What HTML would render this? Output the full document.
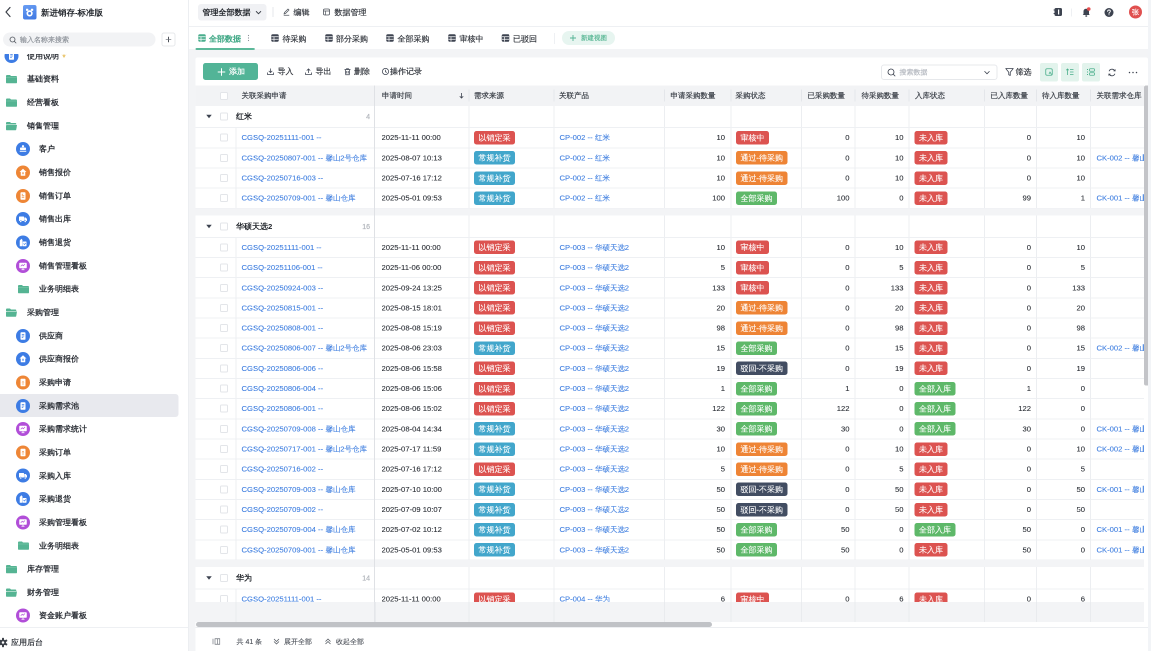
<!DOCTYPE html><html><head><meta charset="utf-8"><style>
html,body{margin:0;padding:0;width:1151px;height:651px;overflow:hidden;background:#fff}
#root{position:absolute;left:0;top:0;width:2302px;height:1302px;transform:scale(0.5);transform-origin:0 0;will-change:transform;-webkit-text-stroke-width:0.4px;font-family:"Liberation Sans",sans-serif;color:#2b2f36;overflow:hidden;background:#fff}
.a{position:absolute}
.b{font-weight:bold;-webkit-text-stroke-width:0}
.t{position:absolute;white-space:nowrap}
svg{position:absolute;overflow:visible}
.sb-item{position:absolute;left:0;height:46px;line-height:46px;font-size:16px;color:#33373e;white-space:nowrap}
.ic{position:absolute;border-radius:50%}
.cb{position:absolute;width:16px;height:16px;border:2px solid #e3e5e9;border-radius:3px;background:#fff;box-sizing:border-box}
.vl{position:absolute;width:2px;background:#eceef1}
.hl{position:absolute;height:2px;background:#eef0f3}
.badge{position:absolute;height:27px;line-height:27px;border-radius:5px;color:#fff;font-size:16px;padding:0 9px;white-space:nowrap;-webkit-text-stroke-width:0.2px}
.lnk{color:#4280e0;-webkit-text-stroke-width:0.2px}
.num{position:absolute;text-align:right;font-size:15.3px;white-space:nowrap;-webkit-text-stroke-width:0.2px}
</style></head><body><div id="root">
<div class="a" style="left:0;top:0;width:376px;height:1302px;background:#fff;border-right:2px solid #eceef1;box-sizing:content-box"></div>
<svg style="left:8px;top:13px" width="16" height="22" viewBox="0 0 16 22"><path d="M12 2 L4 11 L12 20" fill="none" stroke="#3a3f47" stroke-width="2.4" stroke-linecap="round" stroke-linejoin="round"/></svg>
<div class="a" style="left:46px;top:10px;width:27px;height:29px;border-radius:4px;background:linear-gradient(160deg,#6a9ef3,#3d76e2)"></div>
<svg style="left:46px;top:10px" width="27" height="29" viewBox="0 0 27 29"><circle cx="13.2" cy="16.8" r="4.6" fill="none" stroke="#fff" stroke-width="3.2"/><rect x="6" y="7.5" width="4.6" height="4.2" rx="1" fill="#fff"/><rect x="15.8" y="7.5" width="4.6" height="4.2" rx="1" fill="#fff"/><circle cx="13.2" cy="16.5" r="1.6" fill="#3f78e3"/></svg>
<div class="t b" style="left:82px;top:10px;height:30px;line-height:30px;font-size:16.5px;color:#1f2329">新进销存-标准版</div>
<div class="a" style="left:6px;top:65px;width:305px;height:28px;border-radius:14px;background:#f2f3f5"></div>
<svg style="left:18px;top:72px" width="16" height="16" viewBox="0 0 16 16"><circle cx="7" cy="7" r="5" fill="none" stroke="#50555d" stroke-width="1.6"/><path d="M10.8 10.8 L14 14" stroke="#50555d" stroke-width="1.6" stroke-linecap="round"/></svg>
<div class="t" style="left:40px;top:65px;height:28px;line-height:28px;font-size:14px;color:#90959c">输入名称来搜索</div>
<div class="a" style="left:323px;top:65px;width:28px;height:28px;border:2px solid #e6e8eb;border-radius:5px;box-sizing:border-box;background:#fff"></div>
<svg style="left:329px;top:71px" width="16" height="16" viewBox="0 0 16 16"><path d="M8 2.5 V13.5" stroke="#3a3f47" stroke-width="1.8"/><path d="M2.5 8 H13.5" stroke="#6a6f77" stroke-width="1.3"/></svg>
<div class="a" style="left:0;top:108px;width:376px;height:1146px;overflow:hidden">
<svg style="left:9px;top:-10.400000000000006px" width="28" height="28" viewBox="0 0 28 28"><circle cx="14" cy="14" r="14" fill="#3d7ce4"/><rect x="9" y="6.5" width="10" height="15" rx="1.5" fill="#fff"/><path d="M11.5 11 H16.5 M11.5 14 H16.5 M11.5 17 H14.5" stroke="#3d7ce4" stroke-width="1.3"/></svg>
<div class="t" style="left:54px;top:-11.4px;height:30px;line-height:30px;font-size:16px;color:#2a2e35;-webkit-text-stroke-width:0.6px">使用说明</div>
<svg style="left:122px;top:-2.4px" width="12" height="12" viewBox="0 0 12 12"><path d="M1 2 L6 10 L11 2 L8 5 L6 2 L4 5 Z" fill="#e9c46a"/></svg>
<svg style="left:11px;top:41.25999999999999px" width="24" height="18" viewBox="0 0 24 18"><path d="M1 3 Q1 1 3 1 H9 L11 3 H21 Q23 3 23 5 V16 Q23 17.5 21.5 17.5 H2.5 Q1 17.5 1 16 Z" fill="#55b493"/><path d="M1 6 H23" stroke="#7cc8ac" stroke-width="1.2"/></svg>
<div class="t" style="left:54px;top:35.3px;height:30px;line-height:30px;font-size:16px;color:#2a2e35;-webkit-text-stroke-width:0.6px">基础资料</div>
<svg style="left:11px;top:87.91999999999999px" width="24" height="18" viewBox="0 0 24 18"><path d="M1 3 Q1 1 3 1 H9 L11 3 H21 Q23 3 23 5 V16 Q23 17.5 21.5 17.5 H2.5 Q1 17.5 1 16 Z" fill="#55b493"/><path d="M1 6 H23" stroke="#7cc8ac" stroke-width="1.2"/></svg>
<div class="t" style="left:54px;top:81.9px;height:30px;line-height:30px;font-size:16px;color:#2a2e35;-webkit-text-stroke-width:0.6px">经营看板</div>
<svg style="left:11px;top:134.57999999999998px" width="24" height="18" viewBox="0 0 24 18"><path d="M1 3 Q1 1 3 1 H9 L11 3 H20 Q21.5 3 21.5 4.5 V6 H1 Z" fill="#55b493"/><path d="M2.5 7 H23 L21.5 16 Q21.2 17.5 19.8 17.5 H2.5 Q1 17.5 1 16 V8.5 Q1 7 2.5 7 Z" fill="#55b493"/></svg>
<div class="t" style="left:54px;top:128.6px;height:30px;line-height:30px;font-size:16px;color:#2a2e35;-webkit-text-stroke-width:0.6px">销售管理</div>
<svg style="left:32px;top:176.24px" width="28" height="28" viewBox="0 0 28 28"><circle cx="14" cy="14" r="14" fill="#3d7ce4"/><circle cx="14" cy="8.5" r="2.3" fill="#fff"/><rect x="8" y="11" width="12" height="5" rx="1.5" fill="#fff"/><rect x="7.5" y="17.5" width="13" height="2" fill="#fff"/></svg>
<div class="t" style="left:78px;top:175.2px;height:30px;line-height:30px;font-size:16px;color:#2a2e35;-webkit-text-stroke-width:0.6px">客户</div>
<svg style="left:32px;top:222.89999999999998px" width="28" height="28" viewBox="0 0 28 28"><circle cx="14" cy="14" r="14" fill="#ee8636"/><path d="M14 6.5 L21 13 H18.5 V20.5 H9.5 V13 H7 Z" fill="#fff"/><rect x="12.8" y="13.5" width="2.4" height="4" fill="#ee8636"/></svg>
<div class="t" style="left:78px;top:221.9px;height:30px;line-height:30px;font-size:16px;color:#2a2e35;-webkit-text-stroke-width:0.6px">销售报价</div>
<svg style="left:32px;top:269.55999999999995px" width="28" height="28" viewBox="0 0 28 28"><circle cx="14" cy="14" r="14" fill="#ee8636"/><rect x="9" y="6.5" width="10" height="15" rx="1.5" fill="#fff"/><path d="M11.5 10.5 H14 M11.5 13.5 H16.5 M11.5 16.5 H16.5" stroke="#ee8636" stroke-width="1.3"/></svg>
<div class="t" style="left:78px;top:268.6px;height:30px;line-height:30px;font-size:16px;color:#2a2e35;-webkit-text-stroke-width:0.6px">销售订单</div>
<svg style="left:32px;top:316.22px" width="28" height="28" viewBox="0 0 28 28"><circle cx="14" cy="14" r="14" fill="#3d7ce4"/><rect x="6" y="9" width="10" height="9" rx="1" fill="#fff"/><path d="M16.5 11 H19.5 L22 14 V18 H16.5 Z" fill="#fff"/><circle cx="9.5" cy="19" r="2" fill="#fff" stroke="#3d7ce4" stroke-width="1"/><circle cx="18.5" cy="19" r="2" fill="#fff" stroke="#3d7ce4" stroke-width="1"/></svg>
<div class="t" style="left:78px;top:315.2px;height:30px;line-height:30px;font-size:16px;color:#2a2e35;-webkit-text-stroke-width:0.6px">销售出库</div>
<svg style="left:32px;top:362.88px" width="28" height="28" viewBox="0 0 28 28"><circle cx="14" cy="14" r="14" fill="#3d7ce4"/><path d="M7.5 10 L11 6.5 L13 9 V21.5 H7.5 Z" fill="#fff"/><rect x="13.5" y="12" width="7.5" height="9.5" rx="1" fill="#fff"/><path d="M15 16 L17 18 L19.5 15" stroke="#3d7ce4" stroke-width="1.2" fill="none"/></svg>
<div class="t" style="left:78px;top:361.9px;height:30px;line-height:30px;font-size:16px;color:#2a2e35;-webkit-text-stroke-width:0.6px">销售退货</div>
<svg style="left:32px;top:409.53999999999996px" width="28" height="28" viewBox="0 0 28 28"><circle cx="14" cy="14" r="14" fill="#b14ed8"/><rect x="6.5" y="7.5" width="15" height="11" rx="1.5" fill="#fff"/><path d="M14 18.5 V21.5 M11 21.5 H17" stroke="#fff" stroke-width="1.6"/><path d="M9.5 14.5 L12.5 11.5 L14.5 13.5 L18 10" stroke="#b14ed8" stroke-width="1.3" fill="none"/></svg>
<div class="t" style="left:78px;top:408.5px;height:30px;line-height:30px;font-size:16px;color:#2a2e35;-webkit-text-stroke-width:0.6px">销售管理看板</div>
<svg style="left:35px;top:461.19999999999993px" width="24" height="18" viewBox="0 0 24 18"><path d="M1 3 Q1 1 3 1 H9 L11 3 H21 Q23 3 23 5 V16 Q23 17.5 21.5 17.5 H2.5 Q1 17.5 1 16 Z" fill="#55b493"/><path d="M1 6 H23" stroke="#7cc8ac" stroke-width="1.2"/></svg>
<div class="t" style="left:78px;top:455.2px;height:30px;line-height:30px;font-size:16px;color:#2a2e35;-webkit-text-stroke-width:0.6px">业务明细表</div>
<svg style="left:11px;top:507.86px" width="24" height="18" viewBox="0 0 24 18"><path d="M1 3 Q1 1 3 1 H9 L11 3 H20 Q21.5 3 21.5 4.5 V6 H1 Z" fill="#55b493"/><path d="M2.5 7 H23 L21.5 16 Q21.2 17.5 19.8 17.5 H2.5 Q1 17.5 1 16 V8.5 Q1 7 2.5 7 Z" fill="#55b493"/></svg>
<div class="t" style="left:54px;top:501.9px;height:30px;line-height:30px;font-size:16px;color:#2a2e35;-webkit-text-stroke-width:0.6px">采购管理</div>
<svg style="left:32px;top:549.52px" width="28" height="28" viewBox="0 0 28 28"><circle cx="14" cy="14" r="14" fill="#3d7ce4"/><rect x="9" y="6.5" width="10" height="15" rx="1.5" fill="#fff"/><path d="M11.5 11 H16.5 M11.5 14 H16.5 M11.5 17 H14.5" stroke="#3d7ce4" stroke-width="1.3"/></svg>
<div class="t" style="left:78px;top:548.5px;height:30px;line-height:30px;font-size:16px;color:#2a2e35;-webkit-text-stroke-width:0.6px">供应商</div>
<svg style="left:32px;top:596.18px" width="28" height="28" viewBox="0 0 28 28"><circle cx="14" cy="14" r="14" fill="#3d7ce4"/><path d="M14 6.5 L21 13 H18.5 V20.5 H9.5 V13 H7 Z" fill="#fff"/><rect x="12.8" y="13.5" width="2.4" height="4" fill="#3d7ce4"/></svg>
<div class="t" style="left:78px;top:595.2px;height:30px;line-height:30px;font-size:16px;color:#2a2e35;-webkit-text-stroke-width:0.6px">供应商报价</div>
<svg style="left:32px;top:642.84px" width="28" height="28" viewBox="0 0 28 28"><circle cx="14" cy="14" r="14" fill="#ee8636"/><rect x="9" y="6.5" width="10" height="15" rx="1.5" fill="#fff"/><path d="M12 14 L14 11.5 L16 14 M12.5 17 H15.5" stroke="#ee8636" stroke-width="1.3" fill="none"/></svg>
<div class="t" style="left:78px;top:641.8px;height:30px;line-height:30px;font-size:16px;color:#2a2e35;-webkit-text-stroke-width:0.6px">采购申请</div>
<div class="a" style="left:0;top:680px;width:357px;height:46px;background:#e8e9ee;border-radius:0 6px 6px 0"></div>
<svg style="left:32px;top:689.5px" width="28" height="28" viewBox="0 0 28 28"><circle cx="14" cy="14" r="14" fill="#3d7ce4"/><rect x="9" y="6.5" width="10" height="15" rx="1.5" fill="#fff"/><path d="M11.5 11 H16.5 M11.5 14 H16.5 M11.5 17 H14.5" stroke="#3d7ce4" stroke-width="1.3"/></svg>
<div class="t" style="left:78px;top:688.5px;height:30px;line-height:30px;font-size:16px;color:#2a2e35;-webkit-text-stroke-width:0.6px">采购需求池</div>
<svg style="left:32px;top:736.16px" width="28" height="28" viewBox="0 0 28 28"><circle cx="14" cy="14" r="14" fill="#b14ed8"/><rect x="6.5" y="7.5" width="15" height="11" rx="1.5" fill="#fff"/><path d="M14 18.5 V21.5 M11 21.5 H17" stroke="#fff" stroke-width="1.6"/><path d="M9.5 14.5 L12.5 11.5 L14.5 13.5 L18 10" stroke="#b14ed8" stroke-width="1.3" fill="none"/></svg>
<div class="t" style="left:78px;top:735.2px;height:30px;line-height:30px;font-size:16px;color:#2a2e35;-webkit-text-stroke-width:0.6px">采购需求统计</div>
<svg style="left:32px;top:782.8199999999999px" width="28" height="28" viewBox="0 0 28 28"><circle cx="14" cy="14" r="14" fill="#ee8636"/><rect x="9" y="6.5" width="10" height="15" rx="1.5" fill="#fff"/><path d="M12 14 L14 11.5 L16 14 M12.5 17 H15.5" stroke="#ee8636" stroke-width="1.3" fill="none"/></svg>
<div class="t" style="left:78px;top:781.8px;height:30px;line-height:30px;font-size:16px;color:#2a2e35;-webkit-text-stroke-width:0.6px">采购订单</div>
<svg style="left:32px;top:829.4799999999999px" width="28" height="28" viewBox="0 0 28 28"><circle cx="14" cy="14" r="14" fill="#3d7ce4"/><rect x="6" y="9" width="10" height="9" rx="1" fill="#fff"/><path d="M16.5 11 H19.5 L22 14 V18 H16.5 Z" fill="#fff"/><circle cx="9.5" cy="19" r="2" fill="#fff" stroke="#3d7ce4" stroke-width="1"/><circle cx="18.5" cy="19" r="2" fill="#fff" stroke="#3d7ce4" stroke-width="1"/></svg>
<div class="t" style="left:78px;top:828.5px;height:30px;line-height:30px;font-size:16px;color:#2a2e35;-webkit-text-stroke-width:0.6px">采购入库</div>
<svg style="left:32px;top:876.14px" width="28" height="28" viewBox="0 0 28 28"><circle cx="14" cy="14" r="14" fill="#3d7ce4"/><path d="M7.5 10 L11 6.5 L13 9 V21.5 H7.5 Z" fill="#fff"/><rect x="13.5" y="12" width="7.5" height="9.5" rx="1" fill="#fff"/><path d="M15 16 L17 18 L19.5 15" stroke="#3d7ce4" stroke-width="1.2" fill="none"/></svg>
<div class="t" style="left:78px;top:875.1px;height:30px;line-height:30px;font-size:16px;color:#2a2e35;-webkit-text-stroke-width:0.6px">采购退货</div>
<svg style="left:32px;top:922.8px" width="28" height="28" viewBox="0 0 28 28"><circle cx="14" cy="14" r="14" fill="#b14ed8"/><rect x="6.5" y="7.5" width="15" height="11" rx="1.5" fill="#fff"/><path d="M14 18.5 V21.5 M11 21.5 H17" stroke="#fff" stroke-width="1.6"/><path d="M9.5 14.5 L12.5 11.5 L14.5 13.5 L18 10" stroke="#b14ed8" stroke-width="1.3" fill="none"/></svg>
<div class="t" style="left:78px;top:921.8px;height:30px;line-height:30px;font-size:16px;color:#2a2e35;-webkit-text-stroke-width:0.6px">采购管理看板</div>
<svg style="left:35px;top:974.4599999999998px" width="24" height="18" viewBox="0 0 24 18"><path d="M1 3 Q1 1 3 1 H9 L11 3 H21 Q23 3 23 5 V16 Q23 17.5 21.5 17.5 H2.5 Q1 17.5 1 16 Z" fill="#55b493"/><path d="M1 6 H23" stroke="#7cc8ac" stroke-width="1.2"/></svg>
<div class="t" style="left:78px;top:968.5px;height:30px;line-height:30px;font-size:16px;color:#2a2e35;-webkit-text-stroke-width:0.6px">业务明细表</div>
<svg style="left:11px;top:1021.1199999999999px" width="24" height="18" viewBox="0 0 24 18"><path d="M1 3 Q1 1 3 1 H9 L11 3 H21 Q23 3 23 5 V16 Q23 17.5 21.5 17.5 H2.5 Q1 17.5 1 16 Z" fill="#55b493"/><path d="M1 6 H23" stroke="#7cc8ac" stroke-width="1.2"/></svg>
<div class="t" style="left:54px;top:1015.1px;height:30px;line-height:30px;font-size:16px;color:#2a2e35;-webkit-text-stroke-width:0.6px">库存管理</div>
<svg style="left:11px;top:1067.7799999999997px" width="24" height="18" viewBox="0 0 24 18"><path d="M1 3 Q1 1 3 1 H9 L11 3 H20 Q21.5 3 21.5 4.5 V6 H1 Z" fill="#55b493"/><path d="M2.5 7 H23 L21.5 16 Q21.2 17.5 19.8 17.5 H2.5 Q1 17.5 1 16 V8.5 Q1 7 2.5 7 Z" fill="#55b493"/></svg>
<div class="t" style="left:54px;top:1061.8px;height:30px;line-height:30px;font-size:16px;color:#2a2e35;-webkit-text-stroke-width:0.6px">财务管理</div>
<svg style="left:32px;top:1109.4399999999998px" width="28" height="28" viewBox="0 0 28 28"><circle cx="14" cy="14" r="14" fill="#b14ed8"/><rect x="6.5" y="7.5" width="15" height="11" rx="1.5" fill="#fff"/><path d="M14 18.5 V21.5 M11 21.5 H17" stroke="#fff" stroke-width="1.6"/><path d="M9.5 14.5 L12.5 11.5 L14.5 13.5 L18 10" stroke="#b14ed8" stroke-width="1.3" fill="none"/></svg>
<div class="t" style="left:78px;top:1108.4px;height:30px;line-height:30px;font-size:16px;color:#2a2e35;-webkit-text-stroke-width:0.6px">资金账户看板</div>
</div>
<div class="a" style="left:0;top:1254px;width:376px;height:2px;background:#eef0f3"></div>
<svg style="left:-5px;top:1274px" width="22" height="22" viewBox="0 0 22 22"><g fill="#3a3f47"><rect x="9" y="1.5" width="4" height="19" rx="1.5"/><rect x="9" y="1.5" width="4" height="19" rx="1.5" transform="rotate(60 11 11)"/><rect x="9" y="1.5" width="4" height="19" rx="1.5" transform="rotate(120 11 11)"/><circle cx="11" cy="11" r="6"/></g><circle cx="11" cy="11" r="2.5" fill="#fff"/></svg>
<div class="t" style="left:22px;top:1270px;height:30px;line-height:30px;font-size:16px;color:#2b2f36">应用后台</div>
<div class="a" style="left:378px;top:98px;width:1918px;height:1204px;background:#f3f4f6"></div>
<div class="a" style="left:2296px;top:0;width:6px;height:1302px;background:#f2f4f7"></div>
<div class="a" style="left:378px;top:52px;width:1918px;height:2px;background:#eef0f3"></div>
<div class="a" style="left:396px;top:8px;width:137px;height:33px;border-radius:6px;background:#f0f1f4"></div>
<div class="t b" style="left:405px;top:9px;height:31px;line-height:31px;font-size:16px;color:#1f2329">管理全部数据</div>
<svg style="left:510px;top:20px" width="14" height="10" viewBox="0 0 14 10"><path d="M2 2.5 L7 7.5 L12 2.5" fill="none" stroke="#3a3f47" stroke-width="1.8"/></svg>
<div class="a" style="left:545px;top:14px;width:2px;height:20px;background:#e5e6eb"></div>
<svg style="left:565px;top:16px" width="16" height="16" viewBox="0 0 16 16"><path d="M3 12 L4 9 L11 2 L13 4 L6 11 Z M2.5 14.5 H13.5" fill="none" stroke="#50555d" stroke-width="1.5" stroke-linejoin="round"/></svg>
<div class="t" style="left:587px;top:9px;height:31px;line-height:31px;font-size:16px;color:#33373e">编辑</div>
<svg style="left:645px;top:16px" width="16" height="16" viewBox="0 0 16 16"><rect x="2" y="2" width="12" height="12" rx="2.5" fill="none" stroke="#50555d" stroke-width="1.6"/><path d="M2 6 H14 M6 6 V14" stroke="#50555d" stroke-width="1.4"/></svg>
<div class="t" style="left:669px;top:9px;height:31px;line-height:31px;font-size:16px;color:#33373e">数据管理</div>
<svg style="left:2106px;top:15px" width="20" height="18" viewBox="0 0 20 18"><rect x="3" y="1" width="15" height="16" rx="3" fill="#3d4350"/><rect x="1" y="4" width="4" height="2" rx="1" fill="#3d4350"/><rect x="1" y="11" width="4" height="2" rx="1" fill="#3d4350"/><rect x="10" y="4" width="2.4" height="10" fill="#fff"/></svg>
<div class="a" style="left:2142px;top:17px;width:2px;height:16px;background:#eef0f3"></div>
<svg style="left:2162px;top:13px" width="22" height="22" viewBox="0 0 22 22"><path d="M5 15 V10 Q5 4.5 10.5 4.5 Q16 4.5 16 10 V15 L17.5 17 H3.5 Z" fill="#3d4350"/><rect x="8.5" y="17.5" width="4" height="3" rx="1.5" fill="#3d4350"/><circle cx="15.5" cy="5" r="3.6" fill="#e54d4d"/></svg>
<svg style="left:2208px;top:15px" width="20" height="20" viewBox="0 0 20 20"><circle cx="10" cy="10" r="9" fill="#3d4350"/><path d="M7.3 7.8 Q7.3 5 10 5 Q12.7 5 12.7 7.5 Q12.7 9 10.8 10 Q10 10.5 10 12" fill="none" stroke="#fff" stroke-width="1.8" stroke-linecap="round"/><circle cx="10" cy="14.6" r="1.1" fill="#fff"/></svg>
<div class="a" style="left:2258px;top:11px;width:26px;height:26px;border-radius:50%;background:#e0504f;color:#fff;font-size:14px;line-height:26px;text-align:center">张</div>
<svg style="left:396px;top:68px" width="16" height="16" viewBox="0 0 16 16"><rect x="0.5" y="0.5" width="15" height="15" rx="3" fill="#49ad8c"/><path d="M1 5.5 H15 M1 10.5 H15 M6 5.5 V15" stroke="#fff" stroke-width="1.4"/></svg>
<div class="t" style="left:418px;top:62px;height:31px;line-height:31px;font-size:16px;-webkit-text-stroke-width:0.8px;color:#41a886">全部数据</div>
<svg style="left:542px;top:68px" width="16" height="16" viewBox="0 0 16 16"><rect x="0.5" y="0.5" width="15" height="15" rx="3" fill="#3d4350"/><path d="M1 5.5 H15 M1 10.5 H15 M6 5.5 V15" stroke="#fff" stroke-width="1.4"/></svg>
<div class="t" style="left:565px;top:62px;height:31px;line-height:31px;font-size:16px;color:#33373e">待采购</div>
<svg style="left:650px;top:68px" width="16" height="16" viewBox="0 0 16 16"><rect x="0.5" y="0.5" width="15" height="15" rx="3" fill="#3d4350"/><path d="M1 5.5 H15 M1 10.5 H15 M6 5.5 V15" stroke="#fff" stroke-width="1.4"/></svg>
<div class="t" style="left:672px;top:62px;height:31px;line-height:31px;font-size:16px;color:#33373e">部分采购</div>
<svg style="left:772px;top:68px" width="16" height="16" viewBox="0 0 16 16"><rect x="0.5" y="0.5" width="15" height="15" rx="3" fill="#3d4350"/><path d="M1 5.5 H15 M1 10.5 H15 M6 5.5 V15" stroke="#fff" stroke-width="1.4"/></svg>
<div class="t" style="left:795px;top:62px;height:31px;line-height:31px;font-size:16px;color:#33373e">全部采购</div>
<svg style="left:896px;top:68px" width="16" height="16" viewBox="0 0 16 16"><rect x="0.5" y="0.5" width="15" height="15" rx="3" fill="#3d4350"/><path d="M1 5.5 H15 M1 10.5 H15 M6 5.5 V15" stroke="#fff" stroke-width="1.4"/></svg>
<div class="t" style="left:919px;top:62px;height:31px;line-height:31px;font-size:16px;color:#33373e">审核中</div>
<svg style="left:1003px;top:68px" width="16" height="16" viewBox="0 0 16 16"><rect x="0.5" y="0.5" width="15" height="15" rx="3" fill="#3d4350"/><path d="M1 5.5 H15 M1 10.5 H15 M6 5.5 V15" stroke="#fff" stroke-width="1.4"/></svg>
<div class="t" style="left:1026px;top:62px;height:31px;line-height:31px;font-size:16px;color:#33373e">已驳回</div>
<svg style="left:494px;top:68px" width="6" height="16" viewBox="0 0 6 16"><circle cx="3" cy="3" r="1.2" fill="#8a8f97"/><circle cx="3" cy="8" r="1.2" fill="#8a8f97"/><circle cx="3" cy="13" r="1.2" fill="#8a8f97"/></svg>
<div class="a" style="left:391px;top:96px;width:118px;height:4px;border-radius:2px;background:#5cb899"></div>
<div class="a" style="left:1108px;top:66px;width:2px;height:22px;background:#eef0f3"></div>
<div class="a" style="left:1124px;top:62px;width:106px;height:28px;border-radius:14px;background:#e7f5f0"></div>
<svg style="left:1139px;top:69px" width="14" height="14" viewBox="0 0 14 14"><path d="M7 1 V13 M1 7 H13" stroke="#52b393" stroke-width="1.8"/></svg>
<div class="t" style="left:1162px;top:61px;height:30px;line-height:30px;font-size:13px;color:#5cb896">新建视图</div>
<div class="a" style="left:391px;top:115px;width:1905px;height:1187px;background:#fff;border-radius:4px 4px 0 0"></div>
<div class="a" style="left:406px;top:126px;width:110px;height:34px;border-radius:5px;background:#52b497"></div>
<svg style="left:434px;top:135px" width="18" height="18" viewBox="0 0 18 18"><path d="M9 1.5 V16.5 M1.5 9 H16.5" stroke="#fff" stroke-width="2"/></svg>
<div class="t" style="left:458px;top:127px;height:32px;line-height:32px;font-size:16px;color:#fff">添加</div>
<svg style="left:533px;top:135px" width="16" height="16" viewBox="0 0 16 16"><path d="M8 2 V10 M4.5 6.8 L8 10.3 L11.5 6.8 M2 10 V14 H14 V10" fill="none" stroke="#3d4350" stroke-width="1.5"/></svg>
<div class="t" style="left:555px;top:127px;height:32px;line-height:32px;font-size:16px;color:#33373e">导入</div>
<svg style="left:609px;top:135px" width="16" height="16" viewBox="0 0 16 16"><path d="M8 11 V3 M4.5 6.2 L8 2.7 L11.5 6.2 M2 10 V14 H14 V10" fill="none" stroke="#3d4350" stroke-width="1.5"/></svg>
<div class="t" style="left:631px;top:127px;height:32px;line-height:32px;font-size:16px;color:#33373e">导出</div>
<svg style="left:687px;top:135px" width="16" height="16" viewBox="0 0 16 16"><path d="M2 4 H14 M6 4 V2.5 H10 V4 M3.5 4 L4.5 14.5 H11.5 L12.5 4 M6.5 7 V12 M9.5 7 V12" fill="none" stroke="#3d4350" stroke-width="1.5"/></svg>
<div class="t" style="left:708px;top:127px;height:32px;line-height:32px;font-size:16px;color:#33373e">删除</div>
<svg style="left:763px;top:135px" width="16" height="16" viewBox="0 0 16 16"><circle cx="8" cy="8" r="6.2" fill="none" stroke="#3d4350" stroke-width="1.5"/><path d="M8 4.5 V8.5 L10.5 10" fill="none" stroke="#3d4350" stroke-width="1.5"/></svg>
<div class="t" style="left:780px;top:127px;height:32px;line-height:32px;font-size:16px;color:#33373e">操作记录</div>
<div class="a" style="left:1762px;top:129px;width:233px;height:31px;border:2px solid #e6e8eb;border-radius:6px;box-sizing:border-box;background:#fff"></div>
<svg style="left:1774px;top:136px" width="18" height="18" viewBox="0 0 18 18"><circle cx="8" cy="8" r="6" fill="none" stroke="#3d4350" stroke-width="1.7"/><path d="M12.5 12.5 L16 16" stroke="#3d4350" stroke-width="1.7" stroke-linecap="round"/></svg>
<div class="t" style="left:1799px;top:129px;height:31px;line-height:31px;font-size:14px;color:#b6bac1">搜索数据</div>
<svg style="left:1966px;top:139px" width="16" height="12" viewBox="0 0 16 12"><path d="M3 3.5 L8 8.5 L13 3.5" fill="none" stroke="#3d4350" stroke-width="1.7"/></svg>
<svg style="left:2010px;top:134px" width="18" height="20" viewBox="0 0 18 20"><path d="M1.5 3 H16.5 L10.5 10.5 V17 L7.5 15.5 V10.5 Z" fill="none" stroke="#3d4350" stroke-width="1.6" stroke-linejoin="round"/></svg>
<div class="t" style="left:2031px;top:128px;height:32px;line-height:32px;font-size:16px;color:#33373e">筛选</div>
<div class="a" style="left:2080px;top:126px;width:36px;height:37px;border-radius:4px;background:#e2f3ec"></div>
<svg style="left:2089px;top:135px" width="18" height="18" viewBox="0 0 18 18"><rect x="2.5" y="2.5" width="13" height="13" rx="2.5" fill="none" stroke="#4aae8b" stroke-width="1.6"/><path d="M9 13 L11 9 L14 14" fill="none" stroke="#4aae8b" stroke-width="1.5"/></svg>
<div class="a" style="left:2122px;top:126px;width:36px;height:37px;border-radius:4px;background:#e2f3ec"></div>
<svg style="left:2131px;top:135px" width="18" height="18" viewBox="0 0 18 18"><path d="M4 15 V3 M1.5 5.5 L4 3 L6.5 5.5 M9 4 H16 M9 9 H16 M9 14 H16" fill="none" stroke="#4aae8b" stroke-width="1.6"/></svg>
<div class="a" style="left:2164px;top:126px;width:36px;height:37px;border-radius:4px;background:#e2f3ec"></div>
<svg style="left:2173px;top:135px" width="18" height="18" viewBox="0 0 18 18"><path d="M2 3 V5 M2 8 V10 M2 13 V15" stroke="#4aae8b" stroke-width="2"/><rect x="6" y="2.5" width="10" height="5" rx="1.5" fill="none" stroke="#4aae8b" stroke-width="1.6"/><rect x="6" y="10.5" width="10" height="5" rx="1.5" fill="none" stroke="#4aae8b" stroke-width="1.6"/></svg>
<svg style="left:2214px;top:135px" width="20" height="20" viewBox="0 0 20 20"><path d="M4.2 7.5 A6.3 6.3 0 0 1 15.5 6.5 M15.8 12.5 A6.3 6.3 0 0 1 4.5 13.5" fill="none" stroke="#3d4350" stroke-width="1.8"/><path d="M13 6.8 L16.2 7 L16.4 3.8 M7 13.2 L3.8 13 L3.6 16.2" fill="none" stroke="#3d4350" stroke-width="1.6"/></svg>
<svg style="left:2256px;top:142px" width="20" height="6" viewBox="0 0 20 6"><circle cx="3" cy="3" r="1.5" fill="#3d4350"/><circle cx="10" cy="3" r="1.5" fill="#3d4350"/><circle cx="17" cy="3" r="1.5" fill="#3d4350"/></svg>
<div class="a" style="left:391px;top:171px;width:1897px;height:1033px;overflow:hidden">
<div class="a" style="left:0;top:0;width:1897px;height:40.599999999999994px;background:#f2f3f5"></div>
<div class="t" style="left:92px;top:0;height:40px;line-height:40px;font-size:15px;color:#3a3f47">关联采购申请</div>
<div class="t" style="left:373px;top:0;height:40px;line-height:40px;font-size:15px;color:#3a3f47">申请时间</div>
<div class="t" style="left:557px;top:0;height:40px;line-height:40px;font-size:15px;color:#3a3f47">需求来源</div>
<div class="t" style="left:727px;top:0;height:40px;line-height:40px;font-size:15px;color:#3a3f47">关联产品</div>
<div class="t" style="left:950px;top:0;height:40px;line-height:40px;font-size:15px;color:#3a3f47">申请采购数量</div>
<div class="t" style="left:1080px;top:0;height:40px;line-height:40px;font-size:15px;color:#3a3f47">采购状态</div>
<div class="t" style="left:1224px;top:0;height:40px;line-height:40px;font-size:15px;color:#3a3f47">已采购数量</div>
<div class="t" style="left:1332px;top:0;height:40px;line-height:40px;font-size:15px;color:#3a3f47">待采购数量</div>
<div class="t" style="left:1439px;top:0;height:40px;line-height:40px;font-size:15px;color:#3a3f47">入库状态</div>
<div class="t" style="left:1590px;top:0;height:40px;line-height:40px;font-size:15px;color:#3a3f47">已入库数量</div>
<div class="t" style="left:1693px;top:0;height:40px;line-height:40px;font-size:15px;color:#3a3f47">待入库数量</div>
<div class="t" style="left:1802px;top:0;height:40px;line-height:40px;font-size:15px;color:#3a3f47">关联需求仓库</div>
<div class="cb" style="left:49px;top:13px"></div>
<svg style="left:525px;top:13px" width="14" height="14" viewBox="0 0 14 14"><path d="M7 2 V12 M3.5 8.5 L7 12 L10.5 8.5" fill="none" stroke="#3d4350" stroke-width="1.6"/></svg>
<div class="vl" style="left:357px;top:8px;height:24px;background:#e4e6ea"></div>
<div class="vl" style="left:546px;top:8px;height:24px;background:#e4e6ea"></div>
<div class="vl" style="left:716px;top:8px;height:24px;background:#e4e6ea"></div>
<div class="vl" style="left:937px;top:8px;height:24px;background:#e4e6ea"></div>
<div class="vl" style="left:1070px;top:8px;height:24px;background:#e4e6ea"></div>
<div class="vl" style="left:1211px;top:8px;height:24px;background:#e4e6ea"></div>
<div class="vl" style="left:1318px;top:8px;height:24px;background:#e4e6ea"></div>
<div class="vl" style="left:1426px;top:8px;height:24px;background:#e4e6ea"></div>
<div class="vl" style="left:1577px;top:8px;height:24px;background:#e4e6ea"></div>
<div class="vl" style="left:1681px;top:8px;height:24px;background:#e4e6ea"></div>
<div class="vl" style="left:1789px;top:8px;height:24px;background:#e4e6ea"></div>
<svg style="left:19px;top:56.4px" width="16" height="12" viewBox="0 0 16 12"><path d="M2.5 2.5 H13.5 L8 9.5 Z" fill="#3d4350"/></svg>
<div class="cb" style="left:49px;top:54.4px"></div>
<div class="t" style="left:81px;top:47.4px;height:30px;line-height:30px;font-size:15.5px;font-weight:bold;-webkit-text-stroke-width:0;color:#1f2329">红米</div>
<div class="t" style="left:209px;width:140px;text-align:right;top:47.4px;height:30px;line-height:30px;font-size:14px;color:#b3b7bd">4</div>
<div class="vl" style="left:357px;top:40.6px;height:43.6px"></div>
<div class="vl" style="left:546px;top:40.6px;height:43.6px"></div>
<div class="vl" style="left:716px;top:40.6px;height:43.6px"></div>
<div class="vl" style="left:937px;top:40.6px;height:43.6px"></div>
<div class="vl" style="left:1070px;top:40.6px;height:43.6px"></div>
<div class="vl" style="left:1211px;top:40.6px;height:43.6px"></div>
<div class="vl" style="left:1318px;top:40.6px;height:43.6px"></div>
<div class="vl" style="left:1426px;top:40.6px;height:43.6px"></div>
<div class="vl" style="left:1577px;top:40.6px;height:43.6px"></div>
<div class="vl" style="left:1681px;top:40.6px;height:43.6px"></div>
<div class="vl" style="left:1789px;top:40.6px;height:43.6px"></div>
<div class="hl" style="left:0;top:83.2px;width:1897px"></div>
<div class="cb" style="left:49px;top:96.4px"></div>
<div class="t lnk" style="left:92px;top:89.4px;height:30px;line-height:30px;font-size:15.3px">CGSQ-20251111-001 --</div>
<div class="t" style="left:372px;top:89.4px;height:30px;line-height:30px;font-size:15.3px;color:#2b2f36;-webkit-text-stroke-width:0.2px">2025-11-11 00:00</div>
<div class="badge" style="left:556.5px;top:90.9px;background:#dc5350">以销定采</div>
<div class="t lnk" style="left:728px;top:89.4px;height:30px;line-height:30px;font-size:15.3px">CP-002 -- 红米</div>
<div class="num" style="left:938px;width:121px;top:89.4px;height:30px;line-height:30px;color:#2b2f36">10</div>
<div class="badge" style="left:1080.5px;top:90.9px;background:#dc5350">审核中</div>
<div class="num" style="left:1212px;width:96px;top:89.4px;height:30px;line-height:30px;color:#2b2f36">0</div>
<div class="num" style="left:1319px;width:97px;top:89.4px;height:30px;line-height:30px;color:#2b2f36">10</div>
<div class="badge" style="left:1438px;top:90.9px;background:#dc5350">未入库</div>
<div class="num" style="left:1578px;width:93px;top:89.4px;height:30px;line-height:30px;color:#2b2f36">0</div>
<div class="num" style="left:1682px;width:97px;top:89.4px;height:30px;line-height:30px;color:#2b2f36">10</div>
<div class="vl" style="left:80px;top:84.2px;height:40.32px;background:#eceef1"></div>
<div class="vl" style="left:357px;top:84.2px;height:40.32px;background:#eceef1"></div>
<div class="vl" style="left:546px;top:84.2px;height:40.32px;background:#eceef1"></div>
<div class="vl" style="left:716px;top:84.2px;height:40.32px;background:#eceef1"></div>
<div class="vl" style="left:937px;top:84.2px;height:40.32px;background:#eceef1"></div>
<div class="vl" style="left:1070px;top:84.2px;height:40.32px;background:#eceef1"></div>
<div class="vl" style="left:1211px;top:84.2px;height:40.32px;background:#eceef1"></div>
<div class="vl" style="left:1318px;top:84.2px;height:40.32px;background:#eceef1"></div>
<div class="vl" style="left:1426px;top:84.2px;height:40.32px;background:#eceef1"></div>
<div class="vl" style="left:1577px;top:84.2px;height:40.32px;background:#eceef1"></div>
<div class="vl" style="left:1681px;top:84.2px;height:40.32px;background:#eceef1"></div>
<div class="vl" style="left:1789px;top:84.2px;height:40.32px;background:#eceef1"></div>
<div class="hl" style="left:0;top:123.5px;width:1897px"></div>
<div class="cb" style="left:49px;top:136.7px"></div>
<div class="t lnk" style="left:92px;top:129.7px;height:30px;line-height:30px;font-size:15.3px">CGSQ-20250807-001 -- 馨山2号仓库</div>
<div class="t" style="left:372px;top:129.7px;height:30px;line-height:30px;font-size:15.3px;color:#2b2f36;-webkit-text-stroke-width:0.2px">2025-08-07 10:13</div>
<div class="badge" style="left:556.5px;top:131.2px;background:#42a6cb">常规补货</div>
<div class="t lnk" style="left:728px;top:129.7px;height:30px;line-height:30px;font-size:15.3px">CP-002 -- 红米</div>
<div class="num" style="left:938px;width:121px;top:129.7px;height:30px;line-height:30px;color:#2b2f36">10</div>
<div class="badge" style="left:1080.5px;top:131.2px;background:#ee8435">通过-待采购</div>
<div class="num" style="left:1212px;width:96px;top:129.7px;height:30px;line-height:30px;color:#2b2f36">0</div>
<div class="num" style="left:1319px;width:97px;top:129.7px;height:30px;line-height:30px;color:#2b2f36">10</div>
<div class="badge" style="left:1438px;top:131.2px;background:#dc5350">未入库</div>
<div class="num" style="left:1578px;width:93px;top:129.7px;height:30px;line-height:30px;color:#2b2f36">0</div>
<div class="num" style="left:1682px;width:97px;top:129.7px;height:30px;line-height:30px;color:#2b2f36">10</div>
<div class="t lnk" style="left:1802px;top:129.7px;height:30px;line-height:30px;font-size:15.3px">CK-002 -- 馨山2号仓库</div>
<div class="vl" style="left:80px;top:124.5px;height:40.32px;background:#eceef1"></div>
<div class="vl" style="left:357px;top:124.5px;height:40.32px;background:#eceef1"></div>
<div class="vl" style="left:546px;top:124.5px;height:40.32px;background:#eceef1"></div>
<div class="vl" style="left:716px;top:124.5px;height:40.32px;background:#eceef1"></div>
<div class="vl" style="left:937px;top:124.5px;height:40.32px;background:#eceef1"></div>
<div class="vl" style="left:1070px;top:124.5px;height:40.32px;background:#eceef1"></div>
<div class="vl" style="left:1211px;top:124.5px;height:40.32px;background:#eceef1"></div>
<div class="vl" style="left:1318px;top:124.5px;height:40.32px;background:#eceef1"></div>
<div class="vl" style="left:1426px;top:124.5px;height:40.32px;background:#eceef1"></div>
<div class="vl" style="left:1577px;top:124.5px;height:40.32px;background:#eceef1"></div>
<div class="vl" style="left:1681px;top:124.5px;height:40.32px;background:#eceef1"></div>
<div class="vl" style="left:1789px;top:124.5px;height:40.32px;background:#eceef1"></div>
<div class="hl" style="left:0;top:163.8px;width:1897px"></div>
<div class="cb" style="left:49px;top:177.0px"></div>
<div class="t lnk" style="left:92px;top:170.0px;height:30px;line-height:30px;font-size:15.3px">CGSQ-20250716-003 --</div>
<div class="t" style="left:372px;top:170.0px;height:30px;line-height:30px;font-size:15.3px;color:#2b2f36;-webkit-text-stroke-width:0.2px">2025-07-16 17:12</div>
<div class="badge" style="left:556.5px;top:171.5px;background:#42a6cb">常规补货</div>
<div class="t lnk" style="left:728px;top:170.0px;height:30px;line-height:30px;font-size:15.3px">CP-002 -- 红米</div>
<div class="num" style="left:938px;width:121px;top:170.0px;height:30px;line-height:30px;color:#2b2f36">10</div>
<div class="badge" style="left:1080.5px;top:171.5px;background:#ee8435">通过-待采购</div>
<div class="num" style="left:1212px;width:96px;top:170.0px;height:30px;line-height:30px;color:#2b2f36">0</div>
<div class="num" style="left:1319px;width:97px;top:170.0px;height:30px;line-height:30px;color:#2b2f36">10</div>
<div class="badge" style="left:1438px;top:171.5px;background:#dc5350">未入库</div>
<div class="num" style="left:1578px;width:93px;top:170.0px;height:30px;line-height:30px;color:#2b2f36">0</div>
<div class="num" style="left:1682px;width:97px;top:170.0px;height:30px;line-height:30px;color:#2b2f36">10</div>
<div class="vl" style="left:80px;top:164.8px;height:40.32px;background:#eceef1"></div>
<div class="vl" style="left:357px;top:164.8px;height:40.32px;background:#eceef1"></div>
<div class="vl" style="left:546px;top:164.8px;height:40.32px;background:#eceef1"></div>
<div class="vl" style="left:716px;top:164.8px;height:40.32px;background:#eceef1"></div>
<div class="vl" style="left:937px;top:164.8px;height:40.32px;background:#eceef1"></div>
<div class="vl" style="left:1070px;top:164.8px;height:40.32px;background:#eceef1"></div>
<div class="vl" style="left:1211px;top:164.8px;height:40.32px;background:#eceef1"></div>
<div class="vl" style="left:1318px;top:164.8px;height:40.32px;background:#eceef1"></div>
<div class="vl" style="left:1426px;top:164.8px;height:40.32px;background:#eceef1"></div>
<div class="vl" style="left:1577px;top:164.8px;height:40.32px;background:#eceef1"></div>
<div class="vl" style="left:1681px;top:164.8px;height:40.32px;background:#eceef1"></div>
<div class="vl" style="left:1789px;top:164.8px;height:40.32px;background:#eceef1"></div>
<div class="hl" style="left:0;top:204.2px;width:1897px"></div>
<div class="cb" style="left:49px;top:217.3px"></div>
<div class="t lnk" style="left:92px;top:210.3px;height:30px;line-height:30px;font-size:15.3px">CGSQ-20250709-001 -- 馨山仓库</div>
<div class="t" style="left:372px;top:210.3px;height:30px;line-height:30px;font-size:15.3px;color:#2b2f36;-webkit-text-stroke-width:0.2px">2025-05-01 09:53</div>
<div class="badge" style="left:556.5px;top:211.8px;background:#42a6cb">常规补货</div>
<div class="t lnk" style="left:728px;top:210.3px;height:30px;line-height:30px;font-size:15.3px">CP-002 -- 红米</div>
<div class="num" style="left:938px;width:121px;top:210.3px;height:30px;line-height:30px;color:#2b2f36">100</div>
<div class="badge" style="left:1080.5px;top:211.8px;background:#5eb869">全部采购</div>
<div class="num" style="left:1212px;width:96px;top:210.3px;height:30px;line-height:30px;color:#2b2f36">100</div>
<div class="num" style="left:1319px;width:97px;top:210.3px;height:30px;line-height:30px;color:#2b2f36">0</div>
<div class="badge" style="left:1438px;top:211.8px;background:#dc5350">未入库</div>
<div class="num" style="left:1578px;width:93px;top:210.3px;height:30px;line-height:30px;color:#2b2f36">99</div>
<div class="num" style="left:1682px;width:97px;top:210.3px;height:30px;line-height:30px;color:#2b2f36">1</div>
<div class="t lnk" style="left:1802px;top:210.3px;height:30px;line-height:30px;font-size:15.3px">CK-001 -- 馨山仓库</div>
<div class="vl" style="left:80px;top:205.2px;height:40.32px;background:#eceef1"></div>
<div class="vl" style="left:357px;top:205.2px;height:40.32px;background:#eceef1"></div>
<div class="vl" style="left:546px;top:205.2px;height:40.32px;background:#eceef1"></div>
<div class="vl" style="left:716px;top:205.2px;height:40.32px;background:#eceef1"></div>
<div class="vl" style="left:937px;top:205.2px;height:40.32px;background:#eceef1"></div>
<div class="vl" style="left:1070px;top:205.2px;height:40.32px;background:#eceef1"></div>
<div class="vl" style="left:1211px;top:205.2px;height:40.32px;background:#eceef1"></div>
<div class="vl" style="left:1318px;top:205.2px;height:40.32px;background:#eceef1"></div>
<div class="vl" style="left:1426px;top:205.2px;height:40.32px;background:#eceef1"></div>
<div class="vl" style="left:1577px;top:205.2px;height:40.32px;background:#eceef1"></div>
<div class="vl" style="left:1681px;top:205.2px;height:40.32px;background:#eceef1"></div>
<div class="vl" style="left:1789px;top:205.2px;height:40.32px;background:#eceef1"></div>
<div class="hl" style="left:0;top:244.5px;width:1897px"></div>
<div class="a" style="left:0;top:245.5px;width:1897px;height:14.6px;background:#f3f4f6"></div>
<svg style="left:19px;top:275.9px" width="16" height="12" viewBox="0 0 16 12"><path d="M2.5 2.5 H13.5 L8 9.5 Z" fill="#3d4350"/></svg>
<div class="cb" style="left:49px;top:273.9px"></div>
<div class="t" style="left:81px;top:266.9px;height:30px;line-height:30px;font-size:15.5px;font-weight:bold;-webkit-text-stroke-width:0;color:#1f2329">华硕天选2</div>
<div class="t" style="left:209px;width:140px;text-align:right;top:266.9px;height:30px;line-height:30px;font-size:14px;color:#b3b7bd">16</div>
<div class="vl" style="left:357px;top:260.1px;height:43.6px"></div>
<div class="vl" style="left:546px;top:260.1px;height:43.6px"></div>
<div class="vl" style="left:716px;top:260.1px;height:43.6px"></div>
<div class="vl" style="left:937px;top:260.1px;height:43.6px"></div>
<div class="vl" style="left:1070px;top:260.1px;height:43.6px"></div>
<div class="vl" style="left:1211px;top:260.1px;height:43.6px"></div>
<div class="vl" style="left:1318px;top:260.1px;height:43.6px"></div>
<div class="vl" style="left:1426px;top:260.1px;height:43.6px"></div>
<div class="vl" style="left:1577px;top:260.1px;height:43.6px"></div>
<div class="vl" style="left:1681px;top:260.1px;height:43.6px"></div>
<div class="vl" style="left:1789px;top:260.1px;height:43.6px"></div>
<div class="hl" style="left:0;top:302.7px;width:1897px"></div>
<div class="cb" style="left:49px;top:315.8px"></div>
<div class="t lnk" style="left:92px;top:308.8px;height:30px;line-height:30px;font-size:15.3px">CGSQ-20251111-001 --</div>
<div class="t" style="left:372px;top:308.8px;height:30px;line-height:30px;font-size:15.3px;color:#2b2f36;-webkit-text-stroke-width:0.2px">2025-11-11 00:00</div>
<div class="badge" style="left:556.5px;top:310.3px;background:#dc5350">以销定采</div>
<div class="t lnk" style="left:728px;top:308.8px;height:30px;line-height:30px;font-size:15.3px">CP-003 -- 华硕天选2</div>
<div class="num" style="left:938px;width:121px;top:308.8px;height:30px;line-height:30px;color:#2b2f36">10</div>
<div class="badge" style="left:1080.5px;top:310.3px;background:#dc5350">审核中</div>
<div class="num" style="left:1212px;width:96px;top:308.8px;height:30px;line-height:30px;color:#2b2f36">0</div>
<div class="num" style="left:1319px;width:97px;top:308.8px;height:30px;line-height:30px;color:#2b2f36">10</div>
<div class="badge" style="left:1438px;top:310.3px;background:#dc5350">未入库</div>
<div class="num" style="left:1578px;width:93px;top:308.8px;height:30px;line-height:30px;color:#2b2f36">0</div>
<div class="num" style="left:1682px;width:97px;top:308.8px;height:30px;line-height:30px;color:#2b2f36">10</div>
<div class="vl" style="left:80px;top:303.7px;height:40.32px;background:#eceef1"></div>
<div class="vl" style="left:357px;top:303.7px;height:40.32px;background:#eceef1"></div>
<div class="vl" style="left:546px;top:303.7px;height:40.32px;background:#eceef1"></div>
<div class="vl" style="left:716px;top:303.7px;height:40.32px;background:#eceef1"></div>
<div class="vl" style="left:937px;top:303.7px;height:40.32px;background:#eceef1"></div>
<div class="vl" style="left:1070px;top:303.7px;height:40.32px;background:#eceef1"></div>
<div class="vl" style="left:1211px;top:303.7px;height:40.32px;background:#eceef1"></div>
<div class="vl" style="left:1318px;top:303.7px;height:40.32px;background:#eceef1"></div>
<div class="vl" style="left:1426px;top:303.7px;height:40.32px;background:#eceef1"></div>
<div class="vl" style="left:1577px;top:303.7px;height:40.32px;background:#eceef1"></div>
<div class="vl" style="left:1681px;top:303.7px;height:40.32px;background:#eceef1"></div>
<div class="vl" style="left:1789px;top:303.7px;height:40.32px;background:#eceef1"></div>
<div class="hl" style="left:0;top:343.0px;width:1897px"></div>
<div class="cb" style="left:49px;top:356.2px"></div>
<div class="t lnk" style="left:92px;top:349.2px;height:30px;line-height:30px;font-size:15.3px">CGSQ-20251106-001 --</div>
<div class="t" style="left:372px;top:349.2px;height:30px;line-height:30px;font-size:15.3px;color:#2b2f36;-webkit-text-stroke-width:0.2px">2025-11-06 00:00</div>
<div class="badge" style="left:556.5px;top:350.7px;background:#dc5350">以销定采</div>
<div class="t lnk" style="left:728px;top:349.2px;height:30px;line-height:30px;font-size:15.3px">CP-003 -- 华硕天选2</div>
<div class="num" style="left:938px;width:121px;top:349.2px;height:30px;line-height:30px;color:#2b2f36">5</div>
<div class="badge" style="left:1080.5px;top:350.7px;background:#dc5350">审核中</div>
<div class="num" style="left:1212px;width:96px;top:349.2px;height:30px;line-height:30px;color:#2b2f36">0</div>
<div class="num" style="left:1319px;width:97px;top:349.2px;height:30px;line-height:30px;color:#2b2f36">5</div>
<div class="badge" style="left:1438px;top:350.7px;background:#dc5350">未入库</div>
<div class="num" style="left:1578px;width:93px;top:349.2px;height:30px;line-height:30px;color:#2b2f36">0</div>
<div class="num" style="left:1682px;width:97px;top:349.2px;height:30px;line-height:30px;color:#2b2f36">5</div>
<div class="vl" style="left:80px;top:344.0px;height:40.32px;background:#eceef1"></div>
<div class="vl" style="left:357px;top:344.0px;height:40.32px;background:#eceef1"></div>
<div class="vl" style="left:546px;top:344.0px;height:40.32px;background:#eceef1"></div>
<div class="vl" style="left:716px;top:344.0px;height:40.32px;background:#eceef1"></div>
<div class="vl" style="left:937px;top:344.0px;height:40.32px;background:#eceef1"></div>
<div class="vl" style="left:1070px;top:344.0px;height:40.32px;background:#eceef1"></div>
<div class="vl" style="left:1211px;top:344.0px;height:40.32px;background:#eceef1"></div>
<div class="vl" style="left:1318px;top:344.0px;height:40.32px;background:#eceef1"></div>
<div class="vl" style="left:1426px;top:344.0px;height:40.32px;background:#eceef1"></div>
<div class="vl" style="left:1577px;top:344.0px;height:40.32px;background:#eceef1"></div>
<div class="vl" style="left:1681px;top:344.0px;height:40.32px;background:#eceef1"></div>
<div class="vl" style="left:1789px;top:344.0px;height:40.32px;background:#eceef1"></div>
<div class="hl" style="left:0;top:383.3px;width:1897px"></div>
<div class="cb" style="left:49px;top:396.5px"></div>
<div class="t lnk" style="left:92px;top:389.5px;height:30px;line-height:30px;font-size:15.3px">CGSQ-20250924-003 --</div>
<div class="t" style="left:372px;top:389.5px;height:30px;line-height:30px;font-size:15.3px;color:#2b2f36;-webkit-text-stroke-width:0.2px">2025-09-24 13:25</div>
<div class="badge" style="left:556.5px;top:391.0px;background:#dc5350">以销定采</div>
<div class="t lnk" style="left:728px;top:389.5px;height:30px;line-height:30px;font-size:15.3px">CP-003 -- 华硕天选2</div>
<div class="num" style="left:938px;width:121px;top:389.5px;height:30px;line-height:30px;color:#2b2f36">133</div>
<div class="badge" style="left:1080.5px;top:391.0px;background:#dc5350">审核中</div>
<div class="num" style="left:1212px;width:96px;top:389.5px;height:30px;line-height:30px;color:#2b2f36">0</div>
<div class="num" style="left:1319px;width:97px;top:389.5px;height:30px;line-height:30px;color:#2b2f36">133</div>
<div class="badge" style="left:1438px;top:391.0px;background:#dc5350">未入库</div>
<div class="num" style="left:1578px;width:93px;top:389.5px;height:30px;line-height:30px;color:#2b2f36">0</div>
<div class="num" style="left:1682px;width:97px;top:389.5px;height:30px;line-height:30px;color:#2b2f36">133</div>
<div class="vl" style="left:80px;top:384.3px;height:40.32px;background:#eceef1"></div>
<div class="vl" style="left:357px;top:384.3px;height:40.32px;background:#eceef1"></div>
<div class="vl" style="left:546px;top:384.3px;height:40.32px;background:#eceef1"></div>
<div class="vl" style="left:716px;top:384.3px;height:40.32px;background:#eceef1"></div>
<div class="vl" style="left:937px;top:384.3px;height:40.32px;background:#eceef1"></div>
<div class="vl" style="left:1070px;top:384.3px;height:40.32px;background:#eceef1"></div>
<div class="vl" style="left:1211px;top:384.3px;height:40.32px;background:#eceef1"></div>
<div class="vl" style="left:1318px;top:384.3px;height:40.32px;background:#eceef1"></div>
<div class="vl" style="left:1426px;top:384.3px;height:40.32px;background:#eceef1"></div>
<div class="vl" style="left:1577px;top:384.3px;height:40.32px;background:#eceef1"></div>
<div class="vl" style="left:1681px;top:384.3px;height:40.32px;background:#eceef1"></div>
<div class="vl" style="left:1789px;top:384.3px;height:40.32px;background:#eceef1"></div>
<div class="hl" style="left:0;top:423.6px;width:1897px"></div>
<div class="cb" style="left:49px;top:436.8px"></div>
<div class="t lnk" style="left:92px;top:429.8px;height:30px;line-height:30px;font-size:15.3px">CGSQ-20250815-001 --</div>
<div class="t" style="left:372px;top:429.8px;height:30px;line-height:30px;font-size:15.3px;color:#2b2f36;-webkit-text-stroke-width:0.2px">2025-08-15 18:01</div>
<div class="badge" style="left:556.5px;top:431.3px;background:#dc5350">以销定采</div>
<div class="t lnk" style="left:728px;top:429.8px;height:30px;line-height:30px;font-size:15.3px">CP-003 -- 华硕天选2</div>
<div class="num" style="left:938px;width:121px;top:429.8px;height:30px;line-height:30px;color:#2b2f36">20</div>
<div class="badge" style="left:1080.5px;top:431.3px;background:#ee8435">通过-待采购</div>
<div class="num" style="left:1212px;width:96px;top:429.8px;height:30px;line-height:30px;color:#2b2f36">0</div>
<div class="num" style="left:1319px;width:97px;top:429.8px;height:30px;line-height:30px;color:#2b2f36">20</div>
<div class="badge" style="left:1438px;top:431.3px;background:#dc5350">未入库</div>
<div class="num" style="left:1578px;width:93px;top:429.8px;height:30px;line-height:30px;color:#2b2f36">0</div>
<div class="num" style="left:1682px;width:97px;top:429.8px;height:30px;line-height:30px;color:#2b2f36">20</div>
<div class="vl" style="left:80px;top:424.6px;height:40.32px;background:#eceef1"></div>
<div class="vl" style="left:357px;top:424.6px;height:40.32px;background:#eceef1"></div>
<div class="vl" style="left:546px;top:424.6px;height:40.32px;background:#eceef1"></div>
<div class="vl" style="left:716px;top:424.6px;height:40.32px;background:#eceef1"></div>
<div class="vl" style="left:937px;top:424.6px;height:40.32px;background:#eceef1"></div>
<div class="vl" style="left:1070px;top:424.6px;height:40.32px;background:#eceef1"></div>
<div class="vl" style="left:1211px;top:424.6px;height:40.32px;background:#eceef1"></div>
<div class="vl" style="left:1318px;top:424.6px;height:40.32px;background:#eceef1"></div>
<div class="vl" style="left:1426px;top:424.6px;height:40.32px;background:#eceef1"></div>
<div class="vl" style="left:1577px;top:424.6px;height:40.32px;background:#eceef1"></div>
<div class="vl" style="left:1681px;top:424.6px;height:40.32px;background:#eceef1"></div>
<div class="vl" style="left:1789px;top:424.6px;height:40.32px;background:#eceef1"></div>
<div class="hl" style="left:0;top:464.0px;width:1897px"></div>
<div class="cb" style="left:49px;top:477.1px"></div>
<div class="t lnk" style="left:92px;top:470.1px;height:30px;line-height:30px;font-size:15.3px">CGSQ-20250808-001 --</div>
<div class="t" style="left:372px;top:470.1px;height:30px;line-height:30px;font-size:15.3px;color:#2b2f36;-webkit-text-stroke-width:0.2px">2025-08-08 15:19</div>
<div class="badge" style="left:556.5px;top:471.6px;background:#dc5350">以销定采</div>
<div class="t lnk" style="left:728px;top:470.1px;height:30px;line-height:30px;font-size:15.3px">CP-003 -- 华硕天选2</div>
<div class="num" style="left:938px;width:121px;top:470.1px;height:30px;line-height:30px;color:#2b2f36">98</div>
<div class="badge" style="left:1080.5px;top:471.6px;background:#ee8435">通过-待采购</div>
<div class="num" style="left:1212px;width:96px;top:470.1px;height:30px;line-height:30px;color:#2b2f36">0</div>
<div class="num" style="left:1319px;width:97px;top:470.1px;height:30px;line-height:30px;color:#2b2f36">98</div>
<div class="badge" style="left:1438px;top:471.6px;background:#dc5350">未入库</div>
<div class="num" style="left:1578px;width:93px;top:470.1px;height:30px;line-height:30px;color:#2b2f36">0</div>
<div class="num" style="left:1682px;width:97px;top:470.1px;height:30px;line-height:30px;color:#2b2f36">98</div>
<div class="vl" style="left:80px;top:465.0px;height:40.32px;background:#eceef1"></div>
<div class="vl" style="left:357px;top:465.0px;height:40.32px;background:#eceef1"></div>
<div class="vl" style="left:546px;top:465.0px;height:40.32px;background:#eceef1"></div>
<div class="vl" style="left:716px;top:465.0px;height:40.32px;background:#eceef1"></div>
<div class="vl" style="left:937px;top:465.0px;height:40.32px;background:#eceef1"></div>
<div class="vl" style="left:1070px;top:465.0px;height:40.32px;background:#eceef1"></div>
<div class="vl" style="left:1211px;top:465.0px;height:40.32px;background:#eceef1"></div>
<div class="vl" style="left:1318px;top:465.0px;height:40.32px;background:#eceef1"></div>
<div class="vl" style="left:1426px;top:465.0px;height:40.32px;background:#eceef1"></div>
<div class="vl" style="left:1577px;top:465.0px;height:40.32px;background:#eceef1"></div>
<div class="vl" style="left:1681px;top:465.0px;height:40.32px;background:#eceef1"></div>
<div class="vl" style="left:1789px;top:465.0px;height:40.32px;background:#eceef1"></div>
<div class="hl" style="left:0;top:504.3px;width:1897px"></div>
<div class="cb" style="left:49px;top:517.4px"></div>
<div class="t lnk" style="left:92px;top:510.4px;height:30px;line-height:30px;font-size:15.3px">CGSQ-20250806-007 -- 馨山2号仓库</div>
<div class="t" style="left:372px;top:510.4px;height:30px;line-height:30px;font-size:15.3px;color:#2b2f36;-webkit-text-stroke-width:0.2px">2025-08-06 23:03</div>
<div class="badge" style="left:556.5px;top:511.9px;background:#42a6cb">常规补货</div>
<div class="t lnk" style="left:728px;top:510.4px;height:30px;line-height:30px;font-size:15.3px">CP-003 -- 华硕天选2</div>
<div class="num" style="left:938px;width:121px;top:510.4px;height:30px;line-height:30px;color:#2b2f36">15</div>
<div class="badge" style="left:1080.5px;top:511.9px;background:#5eb869">全部采购</div>
<div class="num" style="left:1212px;width:96px;top:510.4px;height:30px;line-height:30px;color:#2b2f36">0</div>
<div class="num" style="left:1319px;width:97px;top:510.4px;height:30px;line-height:30px;color:#2b2f36">15</div>
<div class="badge" style="left:1438px;top:511.9px;background:#dc5350">未入库</div>
<div class="num" style="left:1578px;width:93px;top:510.4px;height:30px;line-height:30px;color:#2b2f36">0</div>
<div class="num" style="left:1682px;width:97px;top:510.4px;height:30px;line-height:30px;color:#2b2f36">15</div>
<div class="t lnk" style="left:1802px;top:510.4px;height:30px;line-height:30px;font-size:15.3px">CK-002 -- 馨山2号仓库</div>
<div class="vl" style="left:80px;top:505.3px;height:40.32px;background:#eceef1"></div>
<div class="vl" style="left:357px;top:505.3px;height:40.32px;background:#eceef1"></div>
<div class="vl" style="left:546px;top:505.3px;height:40.32px;background:#eceef1"></div>
<div class="vl" style="left:716px;top:505.3px;height:40.32px;background:#eceef1"></div>
<div class="vl" style="left:937px;top:505.3px;height:40.32px;background:#eceef1"></div>
<div class="vl" style="left:1070px;top:505.3px;height:40.32px;background:#eceef1"></div>
<div class="vl" style="left:1211px;top:505.3px;height:40.32px;background:#eceef1"></div>
<div class="vl" style="left:1318px;top:505.3px;height:40.32px;background:#eceef1"></div>
<div class="vl" style="left:1426px;top:505.3px;height:40.32px;background:#eceef1"></div>
<div class="vl" style="left:1577px;top:505.3px;height:40.32px;background:#eceef1"></div>
<div class="vl" style="left:1681px;top:505.3px;height:40.32px;background:#eceef1"></div>
<div class="vl" style="left:1789px;top:505.3px;height:40.32px;background:#eceef1"></div>
<div class="hl" style="left:0;top:544.6px;width:1897px"></div>
<div class="cb" style="left:49px;top:557.8px"></div>
<div class="t lnk" style="left:92px;top:550.8px;height:30px;line-height:30px;font-size:15.3px">CGSQ-20250806-006 --</div>
<div class="t" style="left:372px;top:550.8px;height:30px;line-height:30px;font-size:15.3px;color:#2b2f36;-webkit-text-stroke-width:0.2px">2025-08-06 15:58</div>
<div class="badge" style="left:556.5px;top:552.3px;background:#dc5350">以销定采</div>
<div class="t lnk" style="left:728px;top:550.8px;height:30px;line-height:30px;font-size:15.3px">CP-003 -- 华硕天选2</div>
<div class="num" style="left:938px;width:121px;top:550.8px;height:30px;line-height:30px;color:#2b2f36">19</div>
<div class="badge" style="left:1080.5px;top:552.3px;background:#424d62">驳回-不采购</div>
<div class="num" style="left:1212px;width:96px;top:550.8px;height:30px;line-height:30px;color:#2b2f36">0</div>
<div class="num" style="left:1319px;width:97px;top:550.8px;height:30px;line-height:30px;color:#2b2f36">19</div>
<div class="badge" style="left:1438px;top:552.3px;background:#dc5350">未入库</div>
<div class="num" style="left:1578px;width:93px;top:550.8px;height:30px;line-height:30px;color:#2b2f36">0</div>
<div class="num" style="left:1682px;width:97px;top:550.8px;height:30px;line-height:30px;color:#2b2f36">19</div>
<div class="vl" style="left:80px;top:545.6px;height:40.32px;background:#eceef1"></div>
<div class="vl" style="left:357px;top:545.6px;height:40.32px;background:#eceef1"></div>
<div class="vl" style="left:546px;top:545.6px;height:40.32px;background:#eceef1"></div>
<div class="vl" style="left:716px;top:545.6px;height:40.32px;background:#eceef1"></div>
<div class="vl" style="left:937px;top:545.6px;height:40.32px;background:#eceef1"></div>
<div class="vl" style="left:1070px;top:545.6px;height:40.32px;background:#eceef1"></div>
<div class="vl" style="left:1211px;top:545.6px;height:40.32px;background:#eceef1"></div>
<div class="vl" style="left:1318px;top:545.6px;height:40.32px;background:#eceef1"></div>
<div class="vl" style="left:1426px;top:545.6px;height:40.32px;background:#eceef1"></div>
<div class="vl" style="left:1577px;top:545.6px;height:40.32px;background:#eceef1"></div>
<div class="vl" style="left:1681px;top:545.6px;height:40.32px;background:#eceef1"></div>
<div class="vl" style="left:1789px;top:545.6px;height:40.32px;background:#eceef1"></div>
<div class="hl" style="left:0;top:584.9px;width:1897px"></div>
<div class="cb" style="left:49px;top:598.1px"></div>
<div class="t lnk" style="left:92px;top:591.1px;height:30px;line-height:30px;font-size:15.3px">CGSQ-20250806-004 --</div>
<div class="t" style="left:372px;top:591.1px;height:30px;line-height:30px;font-size:15.3px;color:#2b2f36;-webkit-text-stroke-width:0.2px">2025-08-06 15:06</div>
<div class="badge" style="left:556.5px;top:592.6px;background:#dc5350">以销定采</div>
<div class="t lnk" style="left:728px;top:591.1px;height:30px;line-height:30px;font-size:15.3px">CP-003 -- 华硕天选2</div>
<div class="num" style="left:938px;width:121px;top:591.1px;height:30px;line-height:30px;color:#2b2f36">1</div>
<div class="badge" style="left:1080.5px;top:592.6px;background:#5eb869">全部采购</div>
<div class="num" style="left:1212px;width:96px;top:591.1px;height:30px;line-height:30px;color:#2b2f36">1</div>
<div class="num" style="left:1319px;width:97px;top:591.1px;height:30px;line-height:30px;color:#2b2f36">0</div>
<div class="badge" style="left:1438px;top:592.6px;background:#5eb869">全部入库</div>
<div class="num" style="left:1578px;width:93px;top:591.1px;height:30px;line-height:30px;color:#2b2f36">1</div>
<div class="num" style="left:1682px;width:97px;top:591.1px;height:30px;line-height:30px;color:#2b2f36">0</div>
<div class="vl" style="left:80px;top:585.9px;height:40.32px;background:#eceef1"></div>
<div class="vl" style="left:357px;top:585.9px;height:40.32px;background:#eceef1"></div>
<div class="vl" style="left:546px;top:585.9px;height:40.32px;background:#eceef1"></div>
<div class="vl" style="left:716px;top:585.9px;height:40.32px;background:#eceef1"></div>
<div class="vl" style="left:937px;top:585.9px;height:40.32px;background:#eceef1"></div>
<div class="vl" style="left:1070px;top:585.9px;height:40.32px;background:#eceef1"></div>
<div class="vl" style="left:1211px;top:585.9px;height:40.32px;background:#eceef1"></div>
<div class="vl" style="left:1318px;top:585.9px;height:40.32px;background:#eceef1"></div>
<div class="vl" style="left:1426px;top:585.9px;height:40.32px;background:#eceef1"></div>
<div class="vl" style="left:1577px;top:585.9px;height:40.32px;background:#eceef1"></div>
<div class="vl" style="left:1681px;top:585.9px;height:40.32px;background:#eceef1"></div>
<div class="vl" style="left:1789px;top:585.9px;height:40.32px;background:#eceef1"></div>
<div class="hl" style="left:0;top:625.2px;width:1897px"></div>
<div class="cb" style="left:49px;top:638.4px"></div>
<div class="t lnk" style="left:92px;top:631.4px;height:30px;line-height:30px;font-size:15.3px">CGSQ-20250806-001 --</div>
<div class="t" style="left:372px;top:631.4px;height:30px;line-height:30px;font-size:15.3px;color:#2b2f36;-webkit-text-stroke-width:0.2px">2025-08-06 15:02</div>
<div class="badge" style="left:556.5px;top:632.9px;background:#dc5350">以销定采</div>
<div class="t lnk" style="left:728px;top:631.4px;height:30px;line-height:30px;font-size:15.3px">CP-003 -- 华硕天选2</div>
<div class="num" style="left:938px;width:121px;top:631.4px;height:30px;line-height:30px;color:#2b2f36">122</div>
<div class="badge" style="left:1080.5px;top:632.9px;background:#5eb869">全部采购</div>
<div class="num" style="left:1212px;width:96px;top:631.4px;height:30px;line-height:30px;color:#2b2f36">122</div>
<div class="num" style="left:1319px;width:97px;top:631.4px;height:30px;line-height:30px;color:#2b2f36">0</div>
<div class="badge" style="left:1438px;top:632.9px;background:#5eb869">全部入库</div>
<div class="num" style="left:1578px;width:93px;top:631.4px;height:30px;line-height:30px;color:#2b2f36">122</div>
<div class="num" style="left:1682px;width:97px;top:631.4px;height:30px;line-height:30px;color:#2b2f36">0</div>
<div class="vl" style="left:80px;top:626.2px;height:40.32px;background:#eceef1"></div>
<div class="vl" style="left:357px;top:626.2px;height:40.32px;background:#eceef1"></div>
<div class="vl" style="left:546px;top:626.2px;height:40.32px;background:#eceef1"></div>
<div class="vl" style="left:716px;top:626.2px;height:40.32px;background:#eceef1"></div>
<div class="vl" style="left:937px;top:626.2px;height:40.32px;background:#eceef1"></div>
<div class="vl" style="left:1070px;top:626.2px;height:40.32px;background:#eceef1"></div>
<div class="vl" style="left:1211px;top:626.2px;height:40.32px;background:#eceef1"></div>
<div class="vl" style="left:1318px;top:626.2px;height:40.32px;background:#eceef1"></div>
<div class="vl" style="left:1426px;top:626.2px;height:40.32px;background:#eceef1"></div>
<div class="vl" style="left:1577px;top:626.2px;height:40.32px;background:#eceef1"></div>
<div class="vl" style="left:1681px;top:626.2px;height:40.32px;background:#eceef1"></div>
<div class="vl" style="left:1789px;top:626.2px;height:40.32px;background:#eceef1"></div>
<div class="hl" style="left:0;top:665.6px;width:1897px"></div>
<div class="cb" style="left:49px;top:678.7px"></div>
<div class="t lnk" style="left:92px;top:671.7px;height:30px;line-height:30px;font-size:15.3px">CGSQ-20250709-008 -- 馨山仓库</div>
<div class="t" style="left:372px;top:671.7px;height:30px;line-height:30px;font-size:15.3px;color:#2b2f36;-webkit-text-stroke-width:0.2px">2025-08-04 14:34</div>
<div class="badge" style="left:556.5px;top:673.2px;background:#42a6cb">常规补货</div>
<div class="t lnk" style="left:728px;top:671.7px;height:30px;line-height:30px;font-size:15.3px">CP-003 -- 华硕天选2</div>
<div class="num" style="left:938px;width:121px;top:671.7px;height:30px;line-height:30px;color:#2b2f36">30</div>
<div class="badge" style="left:1080.5px;top:673.2px;background:#5eb869">全部采购</div>
<div class="num" style="left:1212px;width:96px;top:671.7px;height:30px;line-height:30px;color:#2b2f36">30</div>
<div class="num" style="left:1319px;width:97px;top:671.7px;height:30px;line-height:30px;color:#2b2f36">0</div>
<div class="badge" style="left:1438px;top:673.2px;background:#5eb869">全部入库</div>
<div class="num" style="left:1578px;width:93px;top:671.7px;height:30px;line-height:30px;color:#2b2f36">30</div>
<div class="num" style="left:1682px;width:97px;top:671.7px;height:30px;line-height:30px;color:#2b2f36">0</div>
<div class="t lnk" style="left:1802px;top:671.7px;height:30px;line-height:30px;font-size:15.3px">CK-001 -- 馨山仓库</div>
<div class="vl" style="left:80px;top:666.6px;height:40.32px;background:#eceef1"></div>
<div class="vl" style="left:357px;top:666.6px;height:40.32px;background:#eceef1"></div>
<div class="vl" style="left:546px;top:666.6px;height:40.32px;background:#eceef1"></div>
<div class="vl" style="left:716px;top:666.6px;height:40.32px;background:#eceef1"></div>
<div class="vl" style="left:937px;top:666.6px;height:40.32px;background:#eceef1"></div>
<div class="vl" style="left:1070px;top:666.6px;height:40.32px;background:#eceef1"></div>
<div class="vl" style="left:1211px;top:666.6px;height:40.32px;background:#eceef1"></div>
<div class="vl" style="left:1318px;top:666.6px;height:40.32px;background:#eceef1"></div>
<div class="vl" style="left:1426px;top:666.6px;height:40.32px;background:#eceef1"></div>
<div class="vl" style="left:1577px;top:666.6px;height:40.32px;background:#eceef1"></div>
<div class="vl" style="left:1681px;top:666.6px;height:40.32px;background:#eceef1"></div>
<div class="vl" style="left:1789px;top:666.6px;height:40.32px;background:#eceef1"></div>
<div class="hl" style="left:0;top:705.9px;width:1897px"></div>
<div class="cb" style="left:49px;top:719.0px"></div>
<div class="t lnk" style="left:92px;top:712.0px;height:30px;line-height:30px;font-size:15.3px">CGSQ-20250717-001 -- 馨山2号仓库</div>
<div class="t" style="left:372px;top:712.0px;height:30px;line-height:30px;font-size:15.3px;color:#2b2f36;-webkit-text-stroke-width:0.2px">2025-07-17 11:59</div>
<div class="badge" style="left:556.5px;top:713.5px;background:#42a6cb">常规补货</div>
<div class="t lnk" style="left:728px;top:712.0px;height:30px;line-height:30px;font-size:15.3px">CP-003 -- 华硕天选2</div>
<div class="num" style="left:938px;width:121px;top:712.0px;height:30px;line-height:30px;color:#2b2f36">10</div>
<div class="badge" style="left:1080.5px;top:713.5px;background:#ee8435">通过-待采购</div>
<div class="num" style="left:1212px;width:96px;top:712.0px;height:30px;line-height:30px;color:#2b2f36">0</div>
<div class="num" style="left:1319px;width:97px;top:712.0px;height:30px;line-height:30px;color:#2b2f36">10</div>
<div class="badge" style="left:1438px;top:713.5px;background:#dc5350">未入库</div>
<div class="num" style="left:1578px;width:93px;top:712.0px;height:30px;line-height:30px;color:#2b2f36">0</div>
<div class="num" style="left:1682px;width:97px;top:712.0px;height:30px;line-height:30px;color:#2b2f36">10</div>
<div class="t lnk" style="left:1802px;top:712.0px;height:30px;line-height:30px;font-size:15.3px">CK-002 -- 馨山2号仓库</div>
<div class="vl" style="left:80px;top:706.9px;height:40.32px;background:#eceef1"></div>
<div class="vl" style="left:357px;top:706.9px;height:40.32px;background:#eceef1"></div>
<div class="vl" style="left:546px;top:706.9px;height:40.32px;background:#eceef1"></div>
<div class="vl" style="left:716px;top:706.9px;height:40.32px;background:#eceef1"></div>
<div class="vl" style="left:937px;top:706.9px;height:40.32px;background:#eceef1"></div>
<div class="vl" style="left:1070px;top:706.9px;height:40.32px;background:#eceef1"></div>
<div class="vl" style="left:1211px;top:706.9px;height:40.32px;background:#eceef1"></div>
<div class="vl" style="left:1318px;top:706.9px;height:40.32px;background:#eceef1"></div>
<div class="vl" style="left:1426px;top:706.9px;height:40.32px;background:#eceef1"></div>
<div class="vl" style="left:1577px;top:706.9px;height:40.32px;background:#eceef1"></div>
<div class="vl" style="left:1681px;top:706.9px;height:40.32px;background:#eceef1"></div>
<div class="vl" style="left:1789px;top:706.9px;height:40.32px;background:#eceef1"></div>
<div class="hl" style="left:0;top:746.2px;width:1897px"></div>
<div class="cb" style="left:49px;top:759.4px"></div>
<div class="t lnk" style="left:92px;top:752.4px;height:30px;line-height:30px;font-size:15.3px">CGSQ-20250716-002 --</div>
<div class="t" style="left:372px;top:752.4px;height:30px;line-height:30px;font-size:15.3px;color:#2b2f36;-webkit-text-stroke-width:0.2px">2025-07-16 17:12</div>
<div class="badge" style="left:556.5px;top:753.9px;background:#dc5350">以销定采</div>
<div class="t lnk" style="left:728px;top:752.4px;height:30px;line-height:30px;font-size:15.3px">CP-003 -- 华硕天选2</div>
<div class="num" style="left:938px;width:121px;top:752.4px;height:30px;line-height:30px;color:#2b2f36">5</div>
<div class="badge" style="left:1080.5px;top:753.9px;background:#ee8435">通过-待采购</div>
<div class="num" style="left:1212px;width:96px;top:752.4px;height:30px;line-height:30px;color:#2b2f36">0</div>
<div class="num" style="left:1319px;width:97px;top:752.4px;height:30px;line-height:30px;color:#2b2f36">5</div>
<div class="badge" style="left:1438px;top:753.9px;background:#dc5350">未入库</div>
<div class="num" style="left:1578px;width:93px;top:752.4px;height:30px;line-height:30px;color:#2b2f36">0</div>
<div class="num" style="left:1682px;width:97px;top:752.4px;height:30px;line-height:30px;color:#2b2f36">5</div>
<div class="vl" style="left:80px;top:747.2px;height:40.32px;background:#eceef1"></div>
<div class="vl" style="left:357px;top:747.2px;height:40.32px;background:#eceef1"></div>
<div class="vl" style="left:546px;top:747.2px;height:40.32px;background:#eceef1"></div>
<div class="vl" style="left:716px;top:747.2px;height:40.32px;background:#eceef1"></div>
<div class="vl" style="left:937px;top:747.2px;height:40.32px;background:#eceef1"></div>
<div class="vl" style="left:1070px;top:747.2px;height:40.32px;background:#eceef1"></div>
<div class="vl" style="left:1211px;top:747.2px;height:40.32px;background:#eceef1"></div>
<div class="vl" style="left:1318px;top:747.2px;height:40.32px;background:#eceef1"></div>
<div class="vl" style="left:1426px;top:747.2px;height:40.32px;background:#eceef1"></div>
<div class="vl" style="left:1577px;top:747.2px;height:40.32px;background:#eceef1"></div>
<div class="vl" style="left:1681px;top:747.2px;height:40.32px;background:#eceef1"></div>
<div class="vl" style="left:1789px;top:747.2px;height:40.32px;background:#eceef1"></div>
<div class="hl" style="left:0;top:786.5px;width:1897px"></div>
<div class="cb" style="left:49px;top:799.7px"></div>
<div class="t lnk" style="left:92px;top:792.7px;height:30px;line-height:30px;font-size:15.3px">CGSQ-20250709-003 -- 馨山仓库</div>
<div class="t" style="left:372px;top:792.7px;height:30px;line-height:30px;font-size:15.3px;color:#2b2f36;-webkit-text-stroke-width:0.2px">2025-07-10 10:00</div>
<div class="badge" style="left:556.5px;top:794.2px;background:#42a6cb">常规补货</div>
<div class="t lnk" style="left:728px;top:792.7px;height:30px;line-height:30px;font-size:15.3px">CP-003 -- 华硕天选2</div>
<div class="num" style="left:938px;width:121px;top:792.7px;height:30px;line-height:30px;color:#2b2f36">50</div>
<div class="badge" style="left:1080.5px;top:794.2px;background:#424d62">驳回-不采购</div>
<div class="num" style="left:1212px;width:96px;top:792.7px;height:30px;line-height:30px;color:#2b2f36">0</div>
<div class="num" style="left:1319px;width:97px;top:792.7px;height:30px;line-height:30px;color:#2b2f36">50</div>
<div class="badge" style="left:1438px;top:794.2px;background:#dc5350">未入库</div>
<div class="num" style="left:1578px;width:93px;top:792.7px;height:30px;line-height:30px;color:#2b2f36">0</div>
<div class="num" style="left:1682px;width:97px;top:792.7px;height:30px;line-height:30px;color:#2b2f36">50</div>
<div class="t lnk" style="left:1802px;top:792.7px;height:30px;line-height:30px;font-size:15.3px">CK-001 -- 馨山仓库</div>
<div class="vl" style="left:80px;top:787.5px;height:40.32px;background:#eceef1"></div>
<div class="vl" style="left:357px;top:787.5px;height:40.32px;background:#eceef1"></div>
<div class="vl" style="left:546px;top:787.5px;height:40.32px;background:#eceef1"></div>
<div class="vl" style="left:716px;top:787.5px;height:40.32px;background:#eceef1"></div>
<div class="vl" style="left:937px;top:787.5px;height:40.32px;background:#eceef1"></div>
<div class="vl" style="left:1070px;top:787.5px;height:40.32px;background:#eceef1"></div>
<div class="vl" style="left:1211px;top:787.5px;height:40.32px;background:#eceef1"></div>
<div class="vl" style="left:1318px;top:787.5px;height:40.32px;background:#eceef1"></div>
<div class="vl" style="left:1426px;top:787.5px;height:40.32px;background:#eceef1"></div>
<div class="vl" style="left:1577px;top:787.5px;height:40.32px;background:#eceef1"></div>
<div class="vl" style="left:1681px;top:787.5px;height:40.32px;background:#eceef1"></div>
<div class="vl" style="left:1789px;top:787.5px;height:40.32px;background:#eceef1"></div>
<div class="hl" style="left:0;top:826.8px;width:1897px"></div>
<div class="cb" style="left:49px;top:840.0px"></div>
<div class="t lnk" style="left:92px;top:833.0px;height:30px;line-height:30px;font-size:15.3px">CGSQ-20250709-002 --</div>
<div class="t" style="left:372px;top:833.0px;height:30px;line-height:30px;font-size:15.3px;color:#2b2f36;-webkit-text-stroke-width:0.2px">2025-07-09 10:07</div>
<div class="badge" style="left:556.5px;top:834.5px;background:#42a6cb">常规补货</div>
<div class="t lnk" style="left:728px;top:833.0px;height:30px;line-height:30px;font-size:15.3px">CP-003 -- 华硕天选2</div>
<div class="num" style="left:938px;width:121px;top:833.0px;height:30px;line-height:30px;color:#2b2f36">50</div>
<div class="badge" style="left:1080.5px;top:834.5px;background:#424d62">驳回-不采购</div>
<div class="num" style="left:1212px;width:96px;top:833.0px;height:30px;line-height:30px;color:#2b2f36">0</div>
<div class="num" style="left:1319px;width:97px;top:833.0px;height:30px;line-height:30px;color:#2b2f36">50</div>
<div class="badge" style="left:1438px;top:834.5px;background:#dc5350">未入库</div>
<div class="num" style="left:1578px;width:93px;top:833.0px;height:30px;line-height:30px;color:#2b2f36">0</div>
<div class="num" style="left:1682px;width:97px;top:833.0px;height:30px;line-height:30px;color:#2b2f36">50</div>
<div class="vl" style="left:80px;top:827.8px;height:40.32px;background:#eceef1"></div>
<div class="vl" style="left:357px;top:827.8px;height:40.32px;background:#eceef1"></div>
<div class="vl" style="left:546px;top:827.8px;height:40.32px;background:#eceef1"></div>
<div class="vl" style="left:716px;top:827.8px;height:40.32px;background:#eceef1"></div>
<div class="vl" style="left:937px;top:827.8px;height:40.32px;background:#eceef1"></div>
<div class="vl" style="left:1070px;top:827.8px;height:40.32px;background:#eceef1"></div>
<div class="vl" style="left:1211px;top:827.8px;height:40.32px;background:#eceef1"></div>
<div class="vl" style="left:1318px;top:827.8px;height:40.32px;background:#eceef1"></div>
<div class="vl" style="left:1426px;top:827.8px;height:40.32px;background:#eceef1"></div>
<div class="vl" style="left:1577px;top:827.8px;height:40.32px;background:#eceef1"></div>
<div class="vl" style="left:1681px;top:827.8px;height:40.32px;background:#eceef1"></div>
<div class="vl" style="left:1789px;top:827.8px;height:40.32px;background:#eceef1"></div>
<div class="hl" style="left:0;top:867.2px;width:1897px"></div>
<div class="cb" style="left:49px;top:880.3px"></div>
<div class="t lnk" style="left:92px;top:873.3px;height:30px;line-height:30px;font-size:15.3px">CGSQ-20250709-004 -- 馨山仓库</div>
<div class="t" style="left:372px;top:873.3px;height:30px;line-height:30px;font-size:15.3px;color:#2b2f36;-webkit-text-stroke-width:0.2px">2025-07-02 10:12</div>
<div class="badge" style="left:556.5px;top:874.8px;background:#42a6cb">常规补货</div>
<div class="t lnk" style="left:728px;top:873.3px;height:30px;line-height:30px;font-size:15.3px">CP-003 -- 华硕天选2</div>
<div class="num" style="left:938px;width:121px;top:873.3px;height:30px;line-height:30px;color:#2b2f36">50</div>
<div class="badge" style="left:1080.5px;top:874.8px;background:#5eb869">全部采购</div>
<div class="num" style="left:1212px;width:96px;top:873.3px;height:30px;line-height:30px;color:#2b2f36">50</div>
<div class="num" style="left:1319px;width:97px;top:873.3px;height:30px;line-height:30px;color:#2b2f36">0</div>
<div class="badge" style="left:1438px;top:874.8px;background:#5eb869">全部入库</div>
<div class="num" style="left:1578px;width:93px;top:873.3px;height:30px;line-height:30px;color:#2b2f36">50</div>
<div class="num" style="left:1682px;width:97px;top:873.3px;height:30px;line-height:30px;color:#2b2f36">0</div>
<div class="t lnk" style="left:1802px;top:873.3px;height:30px;line-height:30px;font-size:15.3px">CK-001 -- 馨山仓库</div>
<div class="vl" style="left:80px;top:868.2px;height:40.32px;background:#eceef1"></div>
<div class="vl" style="left:357px;top:868.2px;height:40.32px;background:#eceef1"></div>
<div class="vl" style="left:546px;top:868.2px;height:40.32px;background:#eceef1"></div>
<div class="vl" style="left:716px;top:868.2px;height:40.32px;background:#eceef1"></div>
<div class="vl" style="left:937px;top:868.2px;height:40.32px;background:#eceef1"></div>
<div class="vl" style="left:1070px;top:868.2px;height:40.32px;background:#eceef1"></div>
<div class="vl" style="left:1211px;top:868.2px;height:40.32px;background:#eceef1"></div>
<div class="vl" style="left:1318px;top:868.2px;height:40.32px;background:#eceef1"></div>
<div class="vl" style="left:1426px;top:868.2px;height:40.32px;background:#eceef1"></div>
<div class="vl" style="left:1577px;top:868.2px;height:40.32px;background:#eceef1"></div>
<div class="vl" style="left:1681px;top:868.2px;height:40.32px;background:#eceef1"></div>
<div class="vl" style="left:1789px;top:868.2px;height:40.32px;background:#eceef1"></div>
<div class="hl" style="left:0;top:907.5px;width:1897px"></div>
<div class="cb" style="left:49px;top:920.6px"></div>
<div class="t lnk" style="left:92px;top:913.6px;height:30px;line-height:30px;font-size:15.3px">CGSQ-20250709-001 -- 馨山仓库</div>
<div class="t" style="left:372px;top:913.6px;height:30px;line-height:30px;font-size:15.3px;color:#2b2f36;-webkit-text-stroke-width:0.2px">2025-05-01 09:53</div>
<div class="badge" style="left:556.5px;top:915.1px;background:#42a6cb">常规补货</div>
<div class="t lnk" style="left:728px;top:913.6px;height:30px;line-height:30px;font-size:15.3px">CP-003 -- 华硕天选2</div>
<div class="num" style="left:938px;width:121px;top:913.6px;height:30px;line-height:30px;color:#2b2f36">50</div>
<div class="badge" style="left:1080.5px;top:915.1px;background:#5eb869">全部采购</div>
<div class="num" style="left:1212px;width:96px;top:913.6px;height:30px;line-height:30px;color:#2b2f36">50</div>
<div class="num" style="left:1319px;width:97px;top:913.6px;height:30px;line-height:30px;color:#2b2f36">0</div>
<div class="badge" style="left:1438px;top:915.1px;background:#dc5350">未入库</div>
<div class="num" style="left:1578px;width:93px;top:913.6px;height:30px;line-height:30px;color:#2b2f36">50</div>
<div class="num" style="left:1682px;width:97px;top:913.6px;height:30px;line-height:30px;color:#2b2f36">0</div>
<div class="t lnk" style="left:1802px;top:913.6px;height:30px;line-height:30px;font-size:15.3px">CK-001 -- 馨山仓库</div>
<div class="vl" style="left:80px;top:908.5px;height:40.32px;background:#eceef1"></div>
<div class="vl" style="left:357px;top:908.5px;height:40.32px;background:#eceef1"></div>
<div class="vl" style="left:546px;top:908.5px;height:40.32px;background:#eceef1"></div>
<div class="vl" style="left:716px;top:908.5px;height:40.32px;background:#eceef1"></div>
<div class="vl" style="left:937px;top:908.5px;height:40.32px;background:#eceef1"></div>
<div class="vl" style="left:1070px;top:908.5px;height:40.32px;background:#eceef1"></div>
<div class="vl" style="left:1211px;top:908.5px;height:40.32px;background:#eceef1"></div>
<div class="vl" style="left:1318px;top:908.5px;height:40.32px;background:#eceef1"></div>
<div class="vl" style="left:1426px;top:908.5px;height:40.32px;background:#eceef1"></div>
<div class="vl" style="left:1577px;top:908.5px;height:40.32px;background:#eceef1"></div>
<div class="vl" style="left:1681px;top:908.5px;height:40.32px;background:#eceef1"></div>
<div class="vl" style="left:1789px;top:908.5px;height:40.32px;background:#eceef1"></div>
<div class="hl" style="left:0;top:947.8px;width:1897px"></div>
<div class="a" style="left:0;top:948.8px;width:1897px;height:14.6px;background:#f3f4f6"></div>
<svg style="left:19px;top:979.2px" width="16" height="12" viewBox="0 0 16 12"><path d="M2.5 2.5 H13.5 L8 9.5 Z" fill="#3d4350"/></svg>
<div class="cb" style="left:49px;top:977.2px"></div>
<div class="t" style="left:81px;top:970.2px;height:30px;line-height:30px;font-size:15.5px;font-weight:bold;-webkit-text-stroke-width:0;color:#1f2329">华为</div>
<div class="t" style="left:209px;width:140px;text-align:right;top:970.2px;height:30px;line-height:30px;font-size:14px;color:#b3b7bd">14</div>
<div class="vl" style="left:357px;top:963.4px;height:43.6px"></div>
<div class="vl" style="left:546px;top:963.4px;height:43.6px"></div>
<div class="vl" style="left:716px;top:963.4px;height:43.6px"></div>
<div class="vl" style="left:937px;top:963.4px;height:43.6px"></div>
<div class="vl" style="left:1070px;top:963.4px;height:43.6px"></div>
<div class="vl" style="left:1211px;top:963.4px;height:43.6px"></div>
<div class="vl" style="left:1318px;top:963.4px;height:43.6px"></div>
<div class="vl" style="left:1426px;top:963.4px;height:43.6px"></div>
<div class="vl" style="left:1577px;top:963.4px;height:43.6px"></div>
<div class="vl" style="left:1681px;top:963.4px;height:43.6px"></div>
<div class="vl" style="left:1789px;top:963.4px;height:43.6px"></div>
<div class="hl" style="left:0;top:1006.0px;width:1897px"></div>
<div class="cb" style="left:49px;top:1019.2px"></div>
<div class="t lnk" style="left:92px;top:1012.2px;height:30px;line-height:30px;font-size:15.3px">CGSQ-20251111-001 --</div>
<div class="t" style="left:372px;top:1012.2px;height:30px;line-height:30px;font-size:15.3px;color:#2b2f36;-webkit-text-stroke-width:0.2px">2025-11-11 00:00</div>
<div class="badge" style="left:556.5px;top:1013.7px;background:#dc5350">以销定采</div>
<div class="t lnk" style="left:728px;top:1012.2px;height:30px;line-height:30px;font-size:15.3px">CP-004 -- 华为</div>
<div class="num" style="left:938px;width:121px;top:1012.2px;height:30px;line-height:30px;color:#2b2f36">6</div>
<div class="badge" style="left:1080.5px;top:1013.7px;background:#dc5350">审核中</div>
<div class="num" style="left:1212px;width:96px;top:1012.2px;height:30px;line-height:30px;color:#2b2f36">0</div>
<div class="num" style="left:1319px;width:97px;top:1012.2px;height:30px;line-height:30px;color:#2b2f36">6</div>
<div class="badge" style="left:1438px;top:1013.7px;background:#dc5350">未入库</div>
<div class="num" style="left:1578px;width:93px;top:1012.2px;height:30px;line-height:30px;color:#2b2f36">0</div>
<div class="num" style="left:1682px;width:97px;top:1012.2px;height:30px;line-height:30px;color:#2b2f36">6</div>
<div class="vl" style="left:80px;top:1007.0px;height:40.32px;background:#eceef1"></div>
<div class="vl" style="left:357px;top:1007.0px;height:40.32px;background:#eceef1"></div>
<div class="vl" style="left:546px;top:1007.0px;height:40.32px;background:#eceef1"></div>
<div class="vl" style="left:716px;top:1007.0px;height:40.32px;background:#eceef1"></div>
<div class="vl" style="left:937px;top:1007.0px;height:40.32px;background:#eceef1"></div>
<div class="vl" style="left:1070px;top:1007.0px;height:40.32px;background:#eceef1"></div>
<div class="vl" style="left:1211px;top:1007.0px;height:40.32px;background:#eceef1"></div>
<div class="vl" style="left:1318px;top:1007.0px;height:40.32px;background:#eceef1"></div>
<div class="vl" style="left:1426px;top:1007.0px;height:40.32px;background:#eceef1"></div>
<div class="vl" style="left:1577px;top:1007.0px;height:40.32px;background:#eceef1"></div>
<div class="vl" style="left:1681px;top:1007.0px;height:40.32px;background:#eceef1"></div>
<div class="vl" style="left:1789px;top:1007.0px;height:40.32px;background:#eceef1"></div>
<div class="hl" style="left:0;top:1046.3px;width:1897px"></div>
<div class="a" style="left:357px;top:0;width:2px;height:1100px;background:#dfe1e5"></div>
</div>
<div class="a" style="left:2288px;top:171px;width:8px;height:1131px;background:#fff"></div>
<div class="a" style="left:2288px;top:171px;width:8px;height:600px;background:#c3c4c8;border-radius:4px 0 0 4px"></div>
<div class="a" style="left:391px;top:1204px;width:1897px;height:40px;background:#f3f4f6"></div>
<div class="vl" style="left:471px;top:1204px;height:40px;background:#e9ebee"></div>
<div class="vl" style="left:748px;top:1204px;height:40px;background:#e9ebee"></div>
<div class="vl" style="left:937px;top:1204px;height:40px;background:#e9ebee"></div>
<div class="vl" style="left:1107px;top:1204px;height:40px;background:#e9ebee"></div>
<div class="vl" style="left:1328px;top:1204px;height:40px;background:#e9ebee"></div>
<div class="vl" style="left:1461px;top:1204px;height:40px;background:#e9ebee"></div>
<div class="vl" style="left:1602px;top:1204px;height:40px;background:#e9ebee"></div>
<div class="vl" style="left:1709px;top:1204px;height:40px;background:#e9ebee"></div>
<div class="vl" style="left:1817px;top:1204px;height:40px;background:#e9ebee"></div>
<div class="vl" style="left:1968px;top:1204px;height:40px;background:#e9ebee"></div>
<div class="vl" style="left:2072px;top:1204px;height:40px;background:#e9ebee"></div>
<div class="vl" style="left:2180px;top:1204px;height:40px;background:#e9ebee"></div>
<div class="a" style="left:749px;top:1204px;width:2px;height:40px;background:#dfe1e5"></div>
<div class="a" style="left:392px;top:1244px;width:1032px;height:10px;border-radius:5px;background:#c0c2c6"></div>
<div class="a" style="left:391px;top:1254px;width:1905px;height:2px;background:#eceef1"></div>
<svg style="left:424px;top:1275px" width="18" height="16" viewBox="0 0 18 16"><path d="M2 2.5 V13.5 M6 2.5 H15.5 V13.5 H6 Z M10.8 2.5 V13.5" fill="none" stroke="#6a6f77" stroke-width="1.3"/></svg>
<div class="t" style="left:473px;top:1268px;height:30px;line-height:30px;font-size:14px;color:#4a4f57;-webkit-text-stroke-width:0.2px">共 41 条</div>
<svg style="left:546px;top:1276px" width="14" height="14" viewBox="0 0 14 14"><path d="M2 2 L7 7 L12 2 M2 7 L7 12 L12 7" fill="none" stroke="#50555d" stroke-width="1.5"/></svg>
<div class="t" style="left:568px;top:1268px;height:30px;line-height:30px;font-size:14px;color:#4a4f57;-webkit-text-stroke-width:0.2px">展开全部</div>
<svg style="left:649px;top:1276px" width="14" height="14" viewBox="0 0 14 14"><path d="M2 7 L7 2 L12 7 M2 12 L7 7 L12 12" fill="none" stroke="#50555d" stroke-width="1.5"/></svg>
<div class="t" style="left:672px;top:1268px;height:30px;line-height:30px;font-size:14px;color:#4a4f57;-webkit-text-stroke-width:0.2px">收起全部</div>
</div></body></html>
